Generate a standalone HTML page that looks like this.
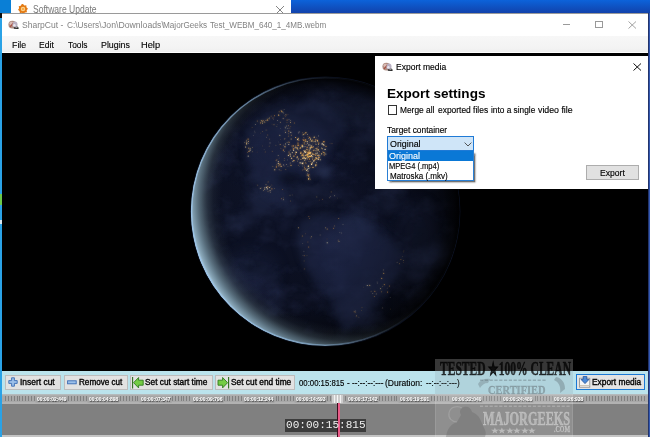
<!DOCTYPE html>
<html><head><meta charset="utf-8"><title>SharpCut</title><style>
html,body{margin:0;padding:0;}
body{width:650px;height:437px;overflow:hidden;position:relative;background:#1b63c8;font-family:'Liberation Sans', sans-serif;}
#root{position:absolute;left:0;top:0;width:650px;height:437px;overflow:hidden;}
.a{position:absolute;}
.t{position:absolute;white-space:nowrap;transform-origin:0 50%;}
</style></head><body>
<div id="root">
<!-- desktop -->
<div class="a" style="left:0;top:0;width:650px;height:437px;background:#0a7fd6"></div>
<div class="a" style="left:291px;top:0;width:359px;height:14px;background:linear-gradient(#0c63da,#1240a8)"></div>
<div class="a" style="left:648px;top:13px;width:1.2px;height:424px;background:#23346c"></div>
<div class="a" style="left:649.2px;top:13px;width:0.8px;height:424px;background:#3258b0"></div>
<!-- software update window -->
<div class="a" style="left:11.3px;top:0;width:280px;height:14px;background:#fff"></div>
<svg class="a" style="left:16.9px;top:2.9px" width="12" height="12" viewBox="-7 -7 14 14">
<polygon fill="#e47a14" points="0,-5.8 1.6,-4 3.9,-4.3 4,-1.9 5.8,-0.3 4.3,1.5 4.6,3.9 2.2,4 0.6,5.8 -1.3,4.4 -3.6,4.9 -4,2.5 -5.8,1 -4.5,-1 -5,-3.3 -2.6,-3.8 -1.4,-5.7"/>
<circle r="2.6" fill="#fbd28a"/><circle r="1.3" fill="#f6a23a"/>
</svg>
<svg class="a" style="left:275px;top:4.5px" width="10" height="10" viewBox="0 0 10 10"><path d="M1 1L9 9M9 1L1 9" stroke="#777" stroke-width="0.9" fill="none"/></svg>
<!-- main window -->
<div class="a" style="left:2px;top:13px;width:646px;height:424px;background:#fff;border-top:1px solid #9a9a9a;box-sizing:border-box"></div>
<div class="a" style="left:0;top:13px;width:2px;height:424px;background:#2aa2e6"></div>
<div class="a" style="left:0;top:194px;width:2px;height:11px;background:#6cc848"></div>
<div class="a" style="left:0;top:220px;width:2px;height:4px;background:#d8e4ee"></div>
<div class="a" style="left:0;top:13px;width:2px;height:4.5px;background:#111"></div>
<!-- title icon -->
<svg class="a" style="left:8.4px;top:19.6px" width="12" height="10" viewBox="0 0 12 10">
<ellipse cx="4.4" cy="4.6" rx="4" ry="3.9" fill="#b08e84"/><ellipse cx="3.4" cy="3.4" rx="2" ry="1.6" fill="#d9bcb4"/><path d="M2 7 L5.6 2.6" stroke="#a8483a" stroke-width="1.1"/><ellipse cx="7" cy="4.4" rx="2.5" ry="2.9" fill="#b9b0c2"/><ellipse cx="6.4" cy="5.2" rx="1.2" ry="1.3" fill="#e9e6ee"/>
<path d="M5.8 8 L10.4 8.4" stroke="#222" stroke-width="1.3"/><path d="M9 6.4 L10.4 8.3" stroke="#333" stroke-width="1"/>
</svg>
<!-- window buttons -->
<div class="a" style="left:562.5px;top:24.2px;width:7.5px;height:1px;background:#9a9a9a"></div>
<div class="a" style="left:594.7px;top:20.8px;width:8px;height:7px;border:1px solid #999;box-sizing:border-box"></div>
<svg class="a" style="left:628px;top:20.5px" width="8.5" height="8" viewBox="0 0 8.5 8"><path d="M0.5 0.5L8 7.5M8 0.5L0.5 7.5" stroke="#999" stroke-width="0.9" fill="none"/></svg>
<!-- menu bar -->
<div class="a" style="left:2px;top:36px;width:646px;height:17px;background:linear-gradient(#f7f7f7,#f3f3f3 70%,#efefef 92%,#fdfdfd 96%)"></div>
<!-- video -->
<div class="a" style="left:2px;top:52.8px;width:646px;height:318.4px;background:#000"></div>
<svg id="earth" width="650" height="437" viewBox="0 0 650 437" style="position:absolute;left:0;top:0">
<defs>
<clipPath id="ec"><circle cx="325.3" cy="211.5" r="134.5"/></clipPath>
<radialGradient id="limb" gradientUnits="userSpaceOnUse" cx="348.3" cy="199.5" r="160.4">
<stop offset="0" stop-color="#46565f" stop-opacity="0"/>
<stop offset="0.79" stop-color="#46565f" stop-opacity="0"/>
<stop offset="0.84" stop-color="#485862" stop-opacity="0.14"/>
<stop offset="0.88" stop-color="#4e606c" stop-opacity="0.4"/>
<stop offset="0.915" stop-color="#5a707e" stop-opacity="0.74"/>
<stop offset="0.95" stop-color="#6c8696" stop-opacity="0.95"/>
<stop offset="0.98" stop-color="#8aa8ba" stop-opacity="1"/>
<stop offset="1" stop-color="#b4d4ea" stop-opacity="1"/>
</radialGradient>
<radialGradient id="shade" gradientUnits="userSpaceOnUse" cx="275.3" cy="221.5" r="195.025">
<stop offset="0" stop-color="#000" stop-opacity="0"/>
<stop offset="0.45" stop-color="#000" stop-opacity="0.03"/>
<stop offset="0.8" stop-color="#000" stop-opacity="0.3"/>
<stop offset="1" stop-color="#000" stop-opacity="0.6"/>
</radialGradient>
<radialGradient id="edge" gradientUnits="userSpaceOnUse" cx="325.3" cy="211.5" r="134.5">
<stop offset="0" stop-color="#000" stop-opacity="0"/>
<stop offset="0.88" stop-color="#000" stop-opacity="0"/>
<stop offset="0.96" stop-color="#000" stop-opacity="0.45"/>
<stop offset="1" stop-color="#000" stop-opacity="0.9"/>
</radialGradient>
<linearGradient id="rim" gradientUnits="userSpaceOnUse" x1="195.9" y1="246.2" x2="454.70000000000005" y2="176.8">
<stop offset="0" stop-color="#9cc4e8" stop-opacity="0.9"/>
<stop offset="0.35" stop-color="#8ab2d6" stop-opacity="0.6"/>
<stop offset="0.55" stop-color="#6a8ab4" stop-opacity="0.25"/>
<stop offset="0.7" stop-color="#5a7aa8" stop-opacity="0.05"/>
<stop offset="1" stop-color="#4a6a98" stop-opacity="0"/>
</linearGradient>
<radialGradient id="body" gradientUnits="userSpaceOnUse" cx="295.3" cy="171.5" r="201.75">
<stop offset="0" stop-color="#0f1429"/>
<stop offset="0.6" stop-color="#0b0f20"/>
<stop offset="1" stop-color="#05070e"/>
</radialGradient>
<filter id="cl" x="0" y="0" width="100%" height="100%" color-interpolation-filters="sRGB">
<feTurbulence type="fractalNoise" baseFrequency="0.018 0.022" numOctaves="5" seed="11" result="n"/>
<feColorMatrix in="n" type="matrix" values="0 0 0 0 0.19  0 0 0 0 0.23  0 0 0 0 0.38  3.2 0 0 0 -1.45"/>
</filter>
<filter id="cl2" x="0" y="0" width="100%" height="100%" color-interpolation-filters="sRGB">
<feTurbulence type="fractalNoise" baseFrequency="0.05 0.06" numOctaves="4" seed="3" result="n"/>
<feColorMatrix in="n" type="matrix" values="0 0 0 0 0.21  0 0 0 0 0.25  0 0 0 0 0.40  0 2.6 0 0 -1.25"/>
</filter>
<filter id="b6" x="-50%" y="-50%" width="200%" height="200%" color-interpolation-filters="sRGB"><feGaussianBlur stdDeviation="6"/></filter>
<filter id="b3" x="-50%" y="-50%" width="200%" height="200%" color-interpolation-filters="sRGB"><feGaussianBlur stdDeviation="3"/></filter>
<filter id="b2" x="-50%" y="-50%" width="200%" height="200%" color-interpolation-filters="sRGB"><feGaussianBlur stdDeviation="1.3"/></filter>
<filter id="b1" x="-50%" y="-50%" width="200%" height="200%" color-interpolation-filters="sRGB"><feGaussianBlur stdDeviation="0.35"/></filter>
</defs>
<circle cx="325.3" cy="211.5" r="135.1" fill="#0a1020"/>
<g clip-path="url(#ec)">
<circle cx="325.3" cy="211.5" r="134.5" fill="url(#body)"/>
<g filter="url(#b6)" opacity="0.3">
<ellipse cx="290" cy="148" rx="42" ry="30" fill="#2b3760"/>
<ellipse cx="270" cy="185" rx="18" ry="14" fill="#283358"/>
<ellipse cx="355" cy="255" rx="42" ry="36" fill="#253056"/>
<ellipse cx="360" cy="300" rx="22" ry="26" fill="#222c50"/>
<ellipse cx="360" cy="110" rx="40" ry="16" fill="#2a3558"/>
<ellipse cx="420" cy="240" rx="20" ry="40" fill="#222b4c"/>
<ellipse cx="250" cy="270" rx="30" ry="22" fill="#1f2848"/>
</g>
<rect x="190.8" y="77.0" width="269.0" height="269.0" filter="url(#cl)" opacity="0.34"/>
<rect x="190.8" y="77.0" width="269.0" height="269.0" filter="url(#cl2)" opacity="0.2"/>
<g filter="url(#b3)" opacity="0.5">
<polygon points="300,222 318,214 345,216 368,226 388,238 406,254 400,272 388,288 374,300 362,314 352,330 344,338 338,322 330,300 314,282 302,262 296,240" fill="#222b4c"/>
<polygon points="246,160 244,138 252,122 284,106 310,100 340,112 345,130 334,146 322,162 312,172 312,182 304,172 284,174 280,188 290,200 280,204 262,192 252,176" fill="#1e2747"/>
</g>
<g filter="url(#b3)" opacity="0.8">
<ellipse cx="290" cy="178" rx="13" ry="6" fill="#070a16" opacity="0.55"/>
<ellipse cx="323" cy="171" rx="8" ry="6.5" fill="#2c3658" opacity="0.8"/>
</g>
<g filter="url(#b2)" opacity="0.75">
<circle cx="273.5" cy="119.3" r="0.42" fill="#ffe8b8" opacity="0.33"/>
<circle cx="252.6" cy="151.7" r="0.48" fill="#ffcf7a" opacity="0.39"/>
<circle cx="283.5" cy="113.2" r="0.30" fill="#ffe8b8" opacity="0.47"/>
<circle cx="255.3" cy="124.7" r="0.42" fill="#ffe8b8" opacity="0.68"/>
<circle cx="264.1" cy="149.7" r="0.31" fill="#ffe8b8" opacity="0.47"/>
<circle cx="254.7" cy="131.1" r="0.46" fill="#ffe8b8" opacity="0.37"/>
<circle cx="295.4" cy="154.4" r="0.39" fill="#f0a444" opacity="0.51"/>
<circle cx="276.9" cy="126.6" r="0.32" fill="#ffcf7a" opacity="0.61"/>
<circle cx="296.3" cy="147.4" r="0.47" fill="#f0a444" opacity="0.59"/>
<circle cx="290.6" cy="120.4" r="0.36" fill="#ffdc98" opacity="0.67"/>
<circle cx="313.6" cy="151.0" r="0.47" fill="#eea040" opacity="0.43"/>
<circle cx="275.9" cy="145.3" r="0.46" fill="#ffcf7a" opacity="0.33"/>
<circle cx="330.0" cy="143.6" r="0.43" fill="#eea040" opacity="0.32"/>
<circle cx="272.2" cy="151.3" r="0.43" fill="#eea040" opacity="0.48"/>
<circle cx="279.1" cy="158.1" r="0.28" fill="#f8b858" opacity="0.48"/>
<circle cx="299.6" cy="145.0" r="0.33" fill="#eea040" opacity="0.41"/>
<circle cx="266.5" cy="137.3" r="0.47" fill="#ffdc98" opacity="0.33"/>
<circle cx="280.5" cy="128.8" r="0.31" fill="#ffe8b8" opacity="0.47"/>
<circle cx="269.3" cy="139.1" r="0.36" fill="#f8b858" opacity="0.65"/>
<circle cx="257.7" cy="121.2" r="0.33" fill="#ffdc98" opacity="0.39"/>
<circle cx="269.7" cy="118.9" r="0.40" fill="#f0a444" opacity="0.54"/>
<circle cx="290.9" cy="154.3" r="0.43" fill="#eea040" opacity="0.32"/>
<circle cx="316.6" cy="137.4" r="0.37" fill="#eea040" opacity="0.34"/>
<circle cx="280.4" cy="122.3" r="0.50" fill="#ffcf7a" opacity="0.48"/>
<circle cx="253.2" cy="135.3" r="0.29" fill="#ffe8b8" opacity="0.65"/>
<circle cx="278.2" cy="155.6" r="0.49" fill="#ffdc98" opacity="0.54"/>
<circle cx="288.0" cy="114.4" r="0.30" fill="#f0a444" opacity="0.44"/>
<circle cx="287.6" cy="159.9" r="0.39" fill="#ffe8b8" opacity="0.38"/>
<circle cx="276.9" cy="159.8" r="0.48" fill="#f0a444" opacity="0.60"/>
<circle cx="277.4" cy="120.5" r="0.45" fill="#ffe8b8" opacity="0.51"/>
<circle cx="274.0" cy="124.7" r="0.46" fill="#f8b858" opacity="0.69"/>
<circle cx="291.1" cy="134.7" r="0.29" fill="#f0a444" opacity="0.31"/>
<circle cx="287.0" cy="122.5" r="0.41" fill="#eea040" opacity="0.44"/>
<circle cx="277.2" cy="124.5" r="0.33" fill="#f8b858" opacity="0.38"/>
<circle cx="302.5" cy="170.6" r="0.31" fill="#eea040" opacity="0.46"/>
<circle cx="312.3" cy="143.9" r="0.32" fill="#f0a444" opacity="0.62"/>
<circle cx="309.7" cy="142.7" r="0.44" fill="#f8b858" opacity="0.33"/>
<circle cx="303.8" cy="134.3" r="0.40" fill="#ffcf7a" opacity="0.35"/>
<circle cx="316.7" cy="162.5" r="0.30" fill="#f8b858" opacity="0.60"/>
<circle cx="266.9" cy="130.0" r="0.33" fill="#f0a444" opacity="0.53"/>
<circle cx="318.2" cy="146.8" r="0.46" fill="#f8b858" opacity="0.65"/>
<circle cx="292.4" cy="147.3" r="0.28" fill="#f8b858" opacity="0.48"/>
<circle cx="299.4" cy="166.2" r="0.31" fill="#ffe8b8" opacity="0.36"/>
<circle cx="310.0" cy="149.7" r="0.35" fill="#ffe8b8" opacity="0.51"/>
<circle cx="287.9" cy="166.2" r="0.47" fill="#f8b858" opacity="0.32"/>
<circle cx="290.2" cy="150.1" r="0.45" fill="#ffdc98" opacity="0.66"/>
<circle cx="269.2" cy="146.1" r="0.46" fill="#f8b858" opacity="0.50"/>
<circle cx="307.6" cy="173.7" r="0.49" fill="#ffe8b8" opacity="0.40"/>
<circle cx="284.7" cy="139.2" r="0.37" fill="#eea040" opacity="0.43"/>
<circle cx="304.9" cy="166.8" r="0.48" fill="#eea040" opacity="0.36"/>
<circle cx="302.6" cy="135.5" r="0.34" fill="#ffdc98" opacity="0.35"/>
<circle cx="280.2" cy="144.5" r="0.50" fill="#f8b858" opacity="0.63"/>
<circle cx="280.7" cy="139.6" r="0.36" fill="#f0a444" opacity="0.34"/>
<circle cx="284.1" cy="109.4" r="0.35" fill="#ffe8b8" opacity="0.55"/>
<circle cx="280.9" cy="148.2" r="0.39" fill="#f0a444" opacity="0.50"/>
<circle cx="306.6" cy="139.9" r="0.30" fill="#eea040" opacity="0.68"/>
<circle cx="252.1" cy="127.5" r="0.41" fill="#f0a444" opacity="0.39"/>
<circle cx="322.5" cy="142.0" r="0.35" fill="#f0a444" opacity="0.52"/>
<circle cx="308.6" cy="178.4" r="0.49" fill="#f8b858" opacity="0.40"/>
<circle cx="262.4" cy="131.4" r="0.35" fill="#f0a444" opacity="0.60"/>
<circle cx="284.6" cy="158.4" r="0.34" fill="#f0a444" opacity="0.62"/>
<circle cx="290.8" cy="126.4" r="0.38" fill="#eea040" opacity="0.56"/>
<circle cx="283.3" cy="145.1" r="0.46" fill="#ffe8b8" opacity="0.46"/>
<circle cx="272.0" cy="124.1" r="0.33" fill="#eea040" opacity="0.38"/>
<circle cx="283.2" cy="112.2" r="0.43" fill="#ffe8b8" opacity="0.45"/>
<circle cx="266.0" cy="130.0" r="0.38" fill="#ffdc98" opacity="0.36"/>
<circle cx="260.6" cy="133.1" r="0.30" fill="#eea040" opacity="0.41"/>
<circle cx="262.3" cy="145.9" r="0.28" fill="#ffcf7a" opacity="0.41"/>
<circle cx="257.1" cy="152.0" r="0.37" fill="#eea040" opacity="0.42"/>
<circle cx="265.2" cy="151.9" r="0.40" fill="#eea040" opacity="0.60"/>
<circle cx="298.3" cy="165.3" r="0.44" fill="#f0a444" opacity="0.50"/>
<circle cx="309.9" cy="156.2" r="0.29" fill="#ffe8b8" opacity="0.63"/>
<circle cx="301.1" cy="163.0" r="0.46" fill="#ffe8b8" opacity="0.36"/>
<circle cx="312.5" cy="150.6" r="0.46" fill="#eea040" opacity="0.31"/>
<circle cx="306.1" cy="160.0" r="0.33" fill="#f8b858" opacity="0.31"/>
<circle cx="278.3" cy="141.9" r="0.29" fill="#ffe8b8" opacity="0.31"/>
<circle cx="305.9" cy="144.7" r="0.28" fill="#eea040" opacity="0.62"/>
<circle cx="252.4" cy="147.4" r="0.44" fill="#ffcf7a" opacity="0.49"/>
<circle cx="303.1" cy="142.5" r="0.47" fill="#eea040" opacity="0.33"/>
<circle cx="298.6" cy="132.9" r="0.42" fill="#ffe8b8" opacity="0.58"/>
<circle cx="305.2" cy="159.9" r="0.43" fill="#ffe8b8" opacity="0.42"/>
<circle cx="270.0" cy="142.9" r="0.45" fill="#ffe8b8" opacity="0.70"/>
<circle cx="285.8" cy="169.5" r="0.49" fill="#f0a444" opacity="0.48"/>
<circle cx="267.8" cy="135.0" r="0.41" fill="#f0a444" opacity="0.55"/>
<circle cx="285.0" cy="130.6" r="0.31" fill="#f0a444" opacity="0.44"/>
<circle cx="255.0" cy="132.8" r="0.35" fill="#ffdc98" opacity="0.44"/>
<circle cx="308.9" cy="175.6" r="0.34" fill="#ffdc98" opacity="0.45"/>
<circle cx="304.2" cy="155.6" r="0.31" fill="#ffdc98" opacity="0.69"/>
<circle cx="290.5" cy="122.2" r="0.36" fill="#ffcf7a" opacity="0.68"/>
<circle cx="317.9" cy="155.3" r="0.48" fill="#ffe8b8" opacity="0.68"/>
<circle cx="311.4" cy="155.7" r="0.67" fill="#ffe8b8" opacity="0.71"/>
<circle cx="310.3" cy="138.3" r="0.41" fill="#ffe8b8" opacity="0.52"/>
<circle cx="319.1" cy="159.7" r="0.44" fill="#eea040" opacity="0.65"/>
<circle cx="308.8" cy="138.2" r="0.46" fill="#ffdc98" opacity="0.62"/>
<circle cx="299.2" cy="148.6" r="0.37" fill="#f8b858" opacity="0.58"/>
<circle cx="289.0" cy="151.9" r="0.52" fill="#f0a444" opacity="0.73"/>
<circle cx="322.6" cy="151.8" r="0.36" fill="#ffcf7a" opacity="0.60"/>
<circle cx="316.7" cy="162.8" r="0.43" fill="#ffe8b8" opacity="0.68"/>
<circle cx="310.7" cy="153.8" r="0.65" fill="#eea040" opacity="0.69"/>
<circle cx="298.9" cy="150.6" r="0.44" fill="#f0a444" opacity="0.53"/>
<circle cx="300.3" cy="148.0" r="0.57" fill="#f8b858" opacity="0.76"/>
<circle cx="297.6" cy="161.1" r="0.47" fill="#ffcf7a" opacity="0.66"/>
<circle cx="318.4" cy="159.2" r="0.61" fill="#ffe8b8" opacity="0.90"/>
<circle cx="305.5" cy="152.2" r="0.67" fill="#ffe8b8" opacity="0.96"/>
<circle cx="310.1" cy="156.6" r="0.36" fill="#eea040" opacity="0.76"/>
<circle cx="303.3" cy="134.5" r="0.66" fill="#ffcf7a" opacity="0.54"/>
<circle cx="316.0" cy="152.0" r="0.53" fill="#eea040" opacity="0.52"/>
<circle cx="308.0" cy="156.7" r="0.40" fill="#eea040" opacity="0.82"/>
<circle cx="310.5" cy="147.7" r="0.42" fill="#f8b858" opacity="0.97"/>
<circle cx="303.8" cy="156.4" r="0.54" fill="#f0a444" opacity="0.51"/>
<circle cx="319.3" cy="151.8" r="0.43" fill="#f8b858" opacity="0.92"/>
<circle cx="301.7" cy="153.1" r="0.40" fill="#eea040" opacity="0.98"/>
<circle cx="307.7" cy="149.4" r="0.38" fill="#eea040" opacity="0.94"/>
<circle cx="302.2" cy="155.5" r="0.57" fill="#f8b858" opacity="0.96"/>
<circle cx="292.3" cy="152.6" r="0.59" fill="#ffdc98" opacity="0.68"/>
<circle cx="309.1" cy="140.8" r="0.38" fill="#f0a444" opacity="0.98"/>
<circle cx="310.8" cy="145.8" r="0.49" fill="#f0a444" opacity="0.63"/>
<circle cx="291.1" cy="139.1" r="0.49" fill="#ffcf7a" opacity="0.96"/>
<circle cx="316.1" cy="150.3" r="0.46" fill="#ffe8b8" opacity="0.61"/>
<circle cx="312.4" cy="154.4" r="0.32" fill="#eea040" opacity="0.70"/>
<circle cx="323.9" cy="141.7" r="0.70" fill="#f0a444" opacity="0.97"/>
<circle cx="316.1" cy="164.9" r="0.51" fill="#f0a444" opacity="0.73"/>
<circle cx="304.3" cy="144.0" r="0.45" fill="#f8b858" opacity="0.67"/>
<circle cx="313.6" cy="154.4" r="0.33" fill="#ffcf7a" opacity="0.71"/>
<circle cx="292.0" cy="146.0" r="0.45" fill="#f0a444" opacity="0.88"/>
<circle cx="315.4" cy="142.9" r="0.32" fill="#f0a444" opacity="0.74"/>
<circle cx="297.9" cy="149.3" r="0.43" fill="#ffdc98" opacity="0.87"/>
<circle cx="321.6" cy="153.8" r="0.62" fill="#ffcf7a" opacity="0.88"/>
<circle cx="300.9" cy="159.5" r="0.62" fill="#f8b858" opacity="0.53"/>
<circle cx="305.1" cy="158.4" r="0.68" fill="#f0a444" opacity="0.81"/>
<circle cx="309.6" cy="137.5" r="0.67" fill="#eea040" opacity="0.65"/>
<circle cx="291.7" cy="135.0" r="0.31" fill="#ffdc98" opacity="0.62"/>
<circle cx="307.2" cy="141.6" r="0.61" fill="#ffdc98" opacity="0.89"/>
<circle cx="312.4" cy="147.3" r="0.50" fill="#eea040" opacity="0.50"/>
<circle cx="304.2" cy="165.8" r="0.36" fill="#f0a444" opacity="0.62"/>
<circle cx="290.5" cy="156.1" r="0.54" fill="#ffdc98" opacity="0.76"/>
<circle cx="310.2" cy="144.8" r="0.33" fill="#ffe8b8" opacity="0.52"/>
<circle cx="303.5" cy="150.4" r="0.47" fill="#ffcf7a" opacity="0.55"/>
<circle cx="309.5" cy="156.0" r="0.34" fill="#eea040" opacity="0.75"/>
<circle cx="317.0" cy="151.0" r="0.35" fill="#eea040" opacity="0.73"/>
<circle cx="311.4" cy="163.8" r="0.61" fill="#f0a444" opacity="0.88"/>
<circle cx="306.0" cy="163.8" r="0.45" fill="#f8b858" opacity="0.87"/>
<circle cx="303.2" cy="154.3" r="0.39" fill="#ffe8b8" opacity="0.64"/>
<circle cx="311.6" cy="155.2" r="0.40" fill="#ffe8b8" opacity="0.62"/>
<circle cx="289.9" cy="128.1" r="0.34" fill="#f8b858" opacity="0.74"/>
<circle cx="319.3" cy="154.0" r="0.35" fill="#ffe8b8" opacity="0.59"/>
<circle cx="311.6" cy="155.5" r="0.51" fill="#ffe8b8" opacity="0.59"/>
<circle cx="308.8" cy="168.4" r="0.68" fill="#ffe8b8" opacity="0.55"/>
<circle cx="307.3" cy="143.5" r="0.31" fill="#ffcf7a" opacity="0.67"/>
<circle cx="312.5" cy="159.0" r="0.54" fill="#f8b858" opacity="0.83"/>
<circle cx="318.4" cy="135.9" r="0.46" fill="#ffe8b8" opacity="0.69"/>
<circle cx="307.0" cy="157.9" r="0.62" fill="#ffcf7a" opacity="0.77"/>
<circle cx="292.8" cy="161.2" r="0.57" fill="#ffe8b8" opacity="0.58"/>
<circle cx="315.8" cy="155.1" r="0.58" fill="#f0a444" opacity="0.70"/>
<circle cx="304.1" cy="143.4" r="0.32" fill="#f0a444" opacity="0.87"/>
<circle cx="308.1" cy="152.9" r="0.61" fill="#eea040" opacity="0.90"/>
<circle cx="310.4" cy="153.0" r="0.66" fill="#ffcf7a" opacity="0.71"/>
<circle cx="290.2" cy="162.9" r="0.48" fill="#ffcf7a" opacity="0.58"/>
<circle cx="316.0" cy="153.7" r="0.62" fill="#ffe8b8" opacity="0.70"/>
<circle cx="302.0" cy="145.6" r="0.50" fill="#f0a444" opacity="0.57"/>
<circle cx="313.7" cy="157.0" r="0.33" fill="#f8b858" opacity="0.69"/>
<circle cx="303.0" cy="169.2" r="0.32" fill="#f0a444" opacity="0.96"/>
<circle cx="291.0" cy="165.3" r="0.55" fill="#f8b858" opacity="0.91"/>
<circle cx="295.6" cy="137.5" r="0.55" fill="#f8b858" opacity="0.81"/>
<circle cx="313.5" cy="146.7" r="0.39" fill="#ffe8b8" opacity="0.70"/>
<circle cx="316.0" cy="159.5" r="0.36" fill="#f8b858" opacity="0.99"/>
<circle cx="324.3" cy="155.1" r="0.60" fill="#f0a444" opacity="0.52"/>
<circle cx="294.6" cy="147.9" r="0.42" fill="#ffe8b8" opacity="0.71"/>
<circle cx="310.1" cy="161.4" r="0.45" fill="#f8b858" opacity="0.75"/>
<circle cx="325.8" cy="153.9" r="0.50" fill="#ffe8b8" opacity="0.62"/>
<circle cx="312.4" cy="141.7" r="0.37" fill="#ffcf7a" opacity="0.74"/>
<circle cx="319.9" cy="155.7" r="0.45" fill="#ffe8b8" opacity="0.90"/>
<circle cx="306.7" cy="151.8" r="0.55" fill="#eea040" opacity="0.54"/>
<circle cx="302.8" cy="166.0" r="0.33" fill="#ffdc98" opacity="0.88"/>
<circle cx="298.4" cy="138.4" r="0.31" fill="#ffe8b8" opacity="0.53"/>
<circle cx="307.6" cy="134.7" r="0.38" fill="#ffdc98" opacity="0.99"/>
<circle cx="305.1" cy="168.9" r="0.62" fill="#eea040" opacity="0.84"/>
<circle cx="313.8" cy="150.5" r="0.44" fill="#f8b858" opacity="0.88"/>
<circle cx="302.9" cy="163.7" r="0.66" fill="#f0a444" opacity="0.73"/>
<circle cx="284.2" cy="151.7" r="0.38" fill="#ffe8b8" opacity="0.63"/>
<circle cx="310.9" cy="161.1" r="0.38" fill="#eea040" opacity="0.70"/>
<circle cx="326.0" cy="146.4" r="0.66" fill="#f0a444" opacity="0.58"/>
<circle cx="320.6" cy="159.7" r="0.55" fill="#ffdc98" opacity="0.68"/>
<circle cx="295.8" cy="147.7" r="0.65" fill="#ffe8b8" opacity="0.55"/>
<circle cx="302.1" cy="145.1" r="0.62" fill="#f0a444" opacity="0.63"/>
<circle cx="300.4" cy="147.8" r="0.61" fill="#f8b858" opacity="0.72"/>
<circle cx="288.3" cy="136.1" r="0.42" fill="#f0a444" opacity="0.76"/>
<circle cx="288.8" cy="131.0" r="0.53" fill="#f0a444" opacity="0.83"/>
<circle cx="308.0" cy="136.3" r="0.39" fill="#eea040" opacity="0.65"/>
<circle cx="297.4" cy="156.7" r="0.66" fill="#f8b858" opacity="0.57"/>
<circle cx="307.3" cy="150.1" r="0.32" fill="#f0a444" opacity="0.78"/>
<circle cx="318.5" cy="157.5" r="0.39" fill="#ffe8b8" opacity="0.79"/>
<circle cx="317.3" cy="158.8" r="0.63" fill="#ffcf7a" opacity="0.58"/>
<circle cx="317.9" cy="149.2" r="0.36" fill="#eea040" opacity="0.55"/>
<circle cx="307.4" cy="169.2" r="0.69" fill="#ffe8b8" opacity="0.53"/>
<circle cx="322.1" cy="144.0" r="0.53" fill="#ffe8b8" opacity="0.80"/>
<circle cx="309.1" cy="144.9" r="0.66" fill="#ffe8b8" opacity="0.52"/>
<circle cx="317.3" cy="153.0" r="0.36" fill="#ffcf7a" opacity="0.96"/>
<circle cx="324.5" cy="152.9" r="0.68" fill="#f8b858" opacity="0.57"/>
<circle cx="293.6" cy="150.4" r="0.56" fill="#ffe8b8" opacity="0.71"/>
<circle cx="314.5" cy="159.3" r="0.42" fill="#eea040" opacity="0.52"/>
<circle cx="313.8" cy="137.3" r="0.30" fill="#eea040" opacity="0.92"/>
<circle cx="314.0" cy="150.0" r="0.56" fill="#ffcf7a" opacity="0.59"/>
<circle cx="308.8" cy="165.6" r="0.35" fill="#eea040" opacity="0.95"/>
<circle cx="318.4" cy="149.4" r="0.32" fill="#eea040" opacity="0.82"/>
<circle cx="291.3" cy="158.5" r="0.51" fill="#eea040" opacity="0.63"/>
<circle cx="332.0" cy="143.3" r="0.33" fill="#f8b858" opacity="0.75"/>
<circle cx="309.5" cy="159.0" r="0.60" fill="#eea040" opacity="0.97"/>
<circle cx="316.5" cy="148.8" r="0.46" fill="#ffdc98" opacity="0.80"/>
<circle cx="323.6" cy="144.6" r="0.58" fill="#ffe8b8" opacity="0.83"/>
<circle cx="288.4" cy="155.5" r="0.58" fill="#ffdc98" opacity="0.93"/>
<circle cx="318.1" cy="150.1" r="0.65" fill="#ffdc98" opacity="0.89"/>
<circle cx="306.7" cy="149.3" r="0.66" fill="#ffcf7a" opacity="0.57"/>
<circle cx="309.1" cy="149.7" r="0.36" fill="#ffcf7a" opacity="0.82"/>
<circle cx="303.9" cy="137.3" r="0.33" fill="#f0a444" opacity="0.80"/>
<circle cx="293.4" cy="149.0" r="0.65" fill="#eea040" opacity="0.88"/>
<circle cx="315.1" cy="150.5" r="0.38" fill="#ffcf7a" opacity="0.56"/>
<circle cx="310.1" cy="147.9" r="0.60" fill="#ffdc98" opacity="0.82"/>
<circle cx="314.2" cy="154.5" r="0.60" fill="#f0a444" opacity="0.60"/>
<circle cx="305.4" cy="158.3" r="0.44" fill="#ffcf7a" opacity="0.97"/>
<circle cx="307.6" cy="143.1" r="0.43" fill="#ffe8b8" opacity="0.98"/>
<circle cx="300.6" cy="153.2" r="0.60" fill="#ffcf7a" opacity="0.89"/>
<circle cx="291.8" cy="158.4" r="0.44" fill="#ffe8b8" opacity="0.85"/>
<circle cx="293.3" cy="145.9" r="0.63" fill="#f0a444" opacity="0.79"/>
<circle cx="310.3" cy="152.4" r="0.38" fill="#ffcf7a" opacity="0.88"/>
<circle cx="323.4" cy="152.3" r="0.50" fill="#f8b858" opacity="0.90"/>
<circle cx="325.1" cy="149.4" r="0.68" fill="#ffe8b8" opacity="0.76"/>
<circle cx="318.8" cy="149.3" r="0.39" fill="#ffdc98" opacity="0.85"/>
<circle cx="311.4" cy="141.0" r="0.70" fill="#ffcf7a" opacity="0.78"/>
<circle cx="302.5" cy="145.6" r="0.46" fill="#eea040" opacity="0.70"/>
<circle cx="317.7" cy="153.0" r="0.41" fill="#ffe8b8" opacity="0.95"/>
<circle cx="291.2" cy="135.3" r="0.35" fill="#eea040" opacity="0.80"/>
<circle cx="310.3" cy="138.3" r="0.44" fill="#f8b858" opacity="0.66"/>
<circle cx="318.5" cy="144.3" r="0.52" fill="#ffdc98" opacity="0.66"/>
<circle cx="291.6" cy="158.1" r="0.53" fill="#ffdc98" opacity="0.56"/>
<circle cx="298.9" cy="140.5" r="0.50" fill="#eea040" opacity="0.63"/>
<circle cx="317.4" cy="140.3" r="0.59" fill="#eea040" opacity="0.99"/>
<circle cx="303.5" cy="162.2" r="0.36" fill="#f8b858" opacity="0.66"/>
<circle cx="308.4" cy="175.6" r="0.70" fill="#eea040" opacity="0.58"/>
<circle cx="319.1" cy="157.6" r="0.69" fill="#eea040" opacity="0.90"/>
<circle cx="307.3" cy="159.3" r="0.34" fill="#f0a444" opacity="0.96"/>
<circle cx="313.1" cy="161.1" r="0.31" fill="#ffdc98" opacity="0.70"/>
<circle cx="305.3" cy="141.5" r="0.55" fill="#f8b858" opacity="0.73"/>
<circle cx="309.1" cy="167.5" r="0.30" fill="#ffdc98" opacity="0.62"/>
<circle cx="305.4" cy="139.9" r="0.56" fill="#eea040" opacity="0.92"/>
<circle cx="305.9" cy="132.7" r="0.61" fill="#f8b858" opacity="0.85"/>
<circle cx="302.9" cy="139.7" r="0.48" fill="#eea040" opacity="0.66"/>
<circle cx="302.6" cy="132.8" r="0.40" fill="#eea040" opacity="0.70"/>
<circle cx="304.0" cy="146.8" r="0.47" fill="#ffe8b8" opacity="0.73"/>
<circle cx="318.8" cy="143.1" r="0.56" fill="#eea040" opacity="0.94"/>
<circle cx="309.2" cy="153.2" r="0.63" fill="#ffcf7a" opacity="0.95"/>
<circle cx="324.0" cy="154.8" r="0.36" fill="#f8b858" opacity="0.89"/>
<circle cx="304.7" cy="151.5" r="0.53" fill="#eea040" opacity="0.77"/>
<circle cx="308.0" cy="152.3" r="0.62" fill="#f0a444" opacity="0.68"/>
<circle cx="286.4" cy="164.3" r="0.38" fill="#ffdc98" opacity="0.84"/>
<circle cx="283.4" cy="150.1" r="0.59" fill="#eea040" opacity="0.81"/>
<circle cx="318.6" cy="154.6" r="0.46" fill="#ffdc98" opacity="0.51"/>
<circle cx="324.0" cy="145.2" r="0.57" fill="#ffcf7a" opacity="0.79"/>
<circle cx="313.0" cy="167.4" r="0.68" fill="#f8b858" opacity="0.76"/>
<circle cx="303.3" cy="153.3" r="0.67" fill="#eea040" opacity="0.53"/>
<circle cx="315.8" cy="164.8" r="0.59" fill="#f8b858" opacity="0.91"/>
<circle cx="300.1" cy="162.8" r="0.63" fill="#ffdc98" opacity="0.91"/>
<circle cx="298.2" cy="138.7" r="0.49" fill="#f8b858" opacity="0.89"/>
<circle cx="308.8" cy="161.2" r="0.40" fill="#f8b858" opacity="0.71"/>
<circle cx="289.3" cy="154.0" r="0.62" fill="#eea040" opacity="0.68"/>
<circle cx="305.8" cy="162.3" r="0.47" fill="#eea040" opacity="0.82"/>
<circle cx="315.3" cy="148.7" r="0.42" fill="#ffcf7a" opacity="0.69"/>
<circle cx="311.3" cy="146.9" r="0.63" fill="#ffcf7a" opacity="0.82"/>
<circle cx="305.7" cy="146.6" r="0.33" fill="#ffe8b8" opacity="0.65"/>
<circle cx="315.1" cy="155.1" r="0.39" fill="#f0a444" opacity="0.89"/>
<circle cx="311.7" cy="145.7" r="0.46" fill="#ffe8b8" opacity="0.77"/>
<circle cx="322.2" cy="143.8" r="0.61" fill="#ffe8b8" opacity="0.83"/>
<circle cx="315.7" cy="165.8" r="0.51" fill="#ffdc98" opacity="0.87"/>
<circle cx="307.3" cy="147.8" r="0.35" fill="#f8b858" opacity="0.71"/>
<circle cx="295.5" cy="154.0" r="0.49" fill="#eea040" opacity="0.95"/>
<circle cx="296.5" cy="152.6" r="0.52" fill="#ffcf7a" opacity="0.93"/>
<circle cx="315.4" cy="159.1" r="0.58" fill="#f0a444" opacity="0.75"/>
<circle cx="316.0" cy="144.2" r="0.47" fill="#ffcf7a" opacity="0.98"/>
<circle cx="314.6" cy="160.1" r="0.56" fill="#ffcf7a" opacity="0.51"/>
<circle cx="299.1" cy="131.9" r="0.43" fill="#ffe8b8" opacity="0.99"/>
<circle cx="290.7" cy="153.6" r="0.36" fill="#ffdc98" opacity="0.61"/>
<circle cx="302.6" cy="145.9" r="0.64" fill="#ffdc98" opacity="0.68"/>
<circle cx="312.6" cy="140.1" r="0.66" fill="#f0a444" opacity="0.64"/>
<circle cx="297.1" cy="157.7" r="0.63" fill="#ffdc98" opacity="0.65"/>
<circle cx="298.8" cy="158.4" r="0.41" fill="#f8b858" opacity="0.75"/>
<circle cx="298.5" cy="138.1" r="0.43" fill="#f0a444" opacity="0.66"/>
<circle cx="298.2" cy="159.2" r="0.46" fill="#ffdc98" opacity="0.79"/>
<circle cx="309.6" cy="153.0" r="0.38" fill="#ffe8b8" opacity="0.96"/>
<circle cx="310.4" cy="148.7" r="0.50" fill="#ffdc98" opacity="0.77"/>
<circle cx="298.0" cy="143.1" r="0.58" fill="#eea040" opacity="0.80"/>
<circle cx="312.8" cy="153.3" r="0.55" fill="#f8b858" opacity="0.81"/>
<circle cx="315.8" cy="155.6" r="0.31" fill="#eea040" opacity="0.89"/>
<circle cx="316.4" cy="158.3" r="0.58" fill="#f8b858" opacity="0.93"/>
<circle cx="301.1" cy="155.9" r="0.47" fill="#ffcf7a" opacity="0.82"/>
<circle cx="296.0" cy="152.2" r="0.63" fill="#ffdc98" opacity="0.89"/>
<circle cx="287.1" cy="142.3" r="0.48" fill="#ffdc98" opacity="0.51"/>
<circle cx="279.8" cy="135.3" r="0.56" fill="#ffdc98" opacity="0.58"/>
<circle cx="305.4" cy="150.8" r="0.49" fill="#eea040" opacity="0.95"/>
<circle cx="311.1" cy="152.1" r="0.57" fill="#ffcf7a" opacity="0.56"/>
<circle cx="311.2" cy="156.7" r="0.49" fill="#ffe8b8" opacity="0.64"/>
<circle cx="310.9" cy="167.4" r="0.37" fill="#eea040" opacity="0.53"/>
<circle cx="304.9" cy="133.8" r="0.59" fill="#eea040" opacity="0.54"/>
<circle cx="297.4" cy="148.1" r="0.57" fill="#ffcf7a" opacity="0.95"/>
<circle cx="309.6" cy="150.6" r="0.31" fill="#ffe8b8" opacity="0.83"/>
<circle cx="318.7" cy="155.9" r="0.59" fill="#ffdc98" opacity="0.58"/>
<circle cx="302.2" cy="146.8" r="0.68" fill="#ffdc98" opacity="0.86"/>
<circle cx="307.1" cy="147.2" r="0.62" fill="#eea040" opacity="0.68"/>
<circle cx="290.3" cy="154.4" r="0.48" fill="#ffe8b8" opacity="0.64"/>
<circle cx="305.3" cy="158.7" r="0.55" fill="#ffe8b8" opacity="0.83"/>
<circle cx="302.3" cy="163.3" r="0.69" fill="#ffe8b8" opacity="0.92"/>
<circle cx="317.6" cy="141.1" r="0.69" fill="#ffdc98" opacity="0.62"/>
<circle cx="303.8" cy="140.2" r="0.66" fill="#f0a444" opacity="0.90"/>
<circle cx="306.2" cy="144.2" r="0.41" fill="#ffcf7a" opacity="0.58"/>
<circle cx="308.5" cy="157.1" r="0.66" fill="#f8b858" opacity="1.00"/>
<circle cx="306.6" cy="170.3" r="0.62" fill="#ffdc98" opacity="0.84"/>
<circle cx="307.2" cy="155.3" r="0.52" fill="#f8b858" opacity="0.90"/>
<circle cx="314.3" cy="137.2" r="0.69" fill="#ffcf7a" opacity="0.65"/>
<circle cx="304.4" cy="142.4" r="0.38" fill="#ffcf7a" opacity="0.63"/>
<circle cx="313.3" cy="141.8" r="0.34" fill="#ffcf7a" opacity="0.90"/>
<circle cx="311.6" cy="164.4" r="0.66" fill="#ffe8b8" opacity="0.94"/>
<circle cx="304.7" cy="160.5" r="0.48" fill="#ffcf7a" opacity="0.84"/>
<circle cx="312.3" cy="162.9" r="0.54" fill="#ffdc98" opacity="0.91"/>
<circle cx="310.4" cy="139.4" r="0.49" fill="#ffdc98" opacity="0.98"/>
<circle cx="305.8" cy="155.4" r="0.64" fill="#f8b858" opacity="0.96"/>
<circle cx="307.4" cy="154.6" r="0.51" fill="#ffcf7a" opacity="0.92"/>
<circle cx="313.0" cy="147.0" r="0.62" fill="#f0a444" opacity="0.85"/>
<circle cx="293.9" cy="160.6" r="0.69" fill="#f8b858" opacity="0.96"/>
<circle cx="308.0" cy="154.9" r="0.48" fill="#ffcf7a" opacity="0.84"/>
<circle cx="309.7" cy="153.3" r="0.54" fill="#ffdc98" opacity="0.94"/>
<circle cx="321.5" cy="148.0" r="0.42" fill="#ffdc98" opacity="0.92"/>
<circle cx="317.0" cy="147.9" r="0.43" fill="#f8b858" opacity="0.86"/>
<circle cx="297.7" cy="139.5" r="0.65" fill="#ffdc98" opacity="0.88"/>
<circle cx="311.7" cy="147.5" r="0.49" fill="#f8b858" opacity="0.94"/>
<circle cx="312.9" cy="154.3" r="0.53" fill="#ffcf7a" opacity="0.98"/>
<circle cx="309.1" cy="151.1" r="0.70" fill="#eea040" opacity="0.94"/>
<circle cx="308.5" cy="145.0" r="0.44" fill="#ffcf7a" opacity="0.86"/>
<circle cx="317.1" cy="149.1" r="0.51" fill="#eea040" opacity="0.92"/>
<circle cx="312.5" cy="156.8" r="0.50" fill="#ffdc98" opacity="0.82"/>
<circle cx="302.9" cy="158.2" r="0.71" fill="#ffcf7a" opacity="0.98"/>
<circle cx="293.9" cy="156.1" r="0.70" fill="#f8b858" opacity="0.83"/>
<circle cx="316.0" cy="157.6" r="0.54" fill="#ffdc98" opacity="0.95"/>
<circle cx="322.3" cy="148.8" r="0.55" fill="#ffcf7a" opacity="0.80"/>
<circle cx="302.3" cy="154.9" r="0.71" fill="#eea040" opacity="0.90"/>
<circle cx="304.1" cy="157.7" r="0.68" fill="#ffdc98" opacity="0.84"/>
<circle cx="304.6" cy="151.7" r="0.73" fill="#ffdc98" opacity="0.85"/>
<circle cx="308.0" cy="154.6" r="0.62" fill="#f8b858" opacity="0.86"/>
<circle cx="307.8" cy="156.4" r="0.57" fill="#f8b858" opacity="0.90"/>
<circle cx="310.2" cy="152.7" r="0.74" fill="#f8b858" opacity="0.93"/>
<circle cx="296.5" cy="148.1" r="0.45" fill="#f0a444" opacity="0.95"/>
<circle cx="303.4" cy="155.3" r="0.49" fill="#ffdc98" opacity="0.85"/>
<circle cx="304.6" cy="167.4" r="0.42" fill="#f0a444" opacity="0.95"/>
<circle cx="313.7" cy="160.9" r="0.57" fill="#ffe8b8" opacity="0.90"/>
<circle cx="308.3" cy="153.3" r="0.72" fill="#f8b858" opacity="0.91"/>
<circle cx="306.8" cy="154.6" r="0.56" fill="#f8b858" opacity="0.86"/>
<circle cx="310.6" cy="156.4" r="0.69" fill="#f8b858" opacity="0.94"/>
<circle cx="298.1" cy="145.2" r="0.74" fill="#f0a444" opacity="0.95"/>
<circle cx="309.6" cy="156.4" r="0.65" fill="#f8b858" opacity="0.93"/>
<circle cx="304.2" cy="150.7" r="0.42" fill="#ffdc98" opacity="0.95"/>
<circle cx="315.8" cy="139.9" r="0.60" fill="#f0a444" opacity="0.87"/>
<circle cx="315.1" cy="141.3" r="0.59" fill="#ffdc98" opacity="0.80"/>
<circle cx="314.4" cy="160.7" r="0.49" fill="#f0a444" opacity="0.91"/>
<circle cx="317.9" cy="155.5" r="0.62" fill="#f0a444" opacity="0.97"/>
<circle cx="301.0" cy="152.1" r="0.60" fill="#eea040" opacity="0.82"/>
<circle cx="308.4" cy="166.2" r="0.75" fill="#ffdc98" opacity="0.96"/>
<circle cx="295.7" cy="146.1" r="0.51" fill="#eea040" opacity="0.82"/>
<circle cx="269.4" cy="117.4" r="0.46" fill="#ffcf7a" opacity="0.46"/>
<circle cx="264.3" cy="121.8" r="0.38" fill="#ffcf7a" opacity="0.82"/>
<circle cx="260.9" cy="122.6" r="0.38" fill="#eea040" opacity="0.83"/>
<circle cx="271.1" cy="116.1" r="0.33" fill="#eea040" opacity="0.84"/>
<circle cx="262.6" cy="123.4" r="0.48" fill="#ffcf7a" opacity="0.79"/>
<circle cx="260.6" cy="122.9" r="0.48" fill="#f8b858" opacity="0.84"/>
<circle cx="274.5" cy="115.7" r="0.58" fill="#eea040" opacity="0.46"/>
<circle cx="265.8" cy="120.4" r="0.46" fill="#ffcf7a" opacity="0.63"/>
<circle cx="278.3" cy="114.9" r="0.40" fill="#ffe8b8" opacity="0.65"/>
<circle cx="282.2" cy="112.0" r="0.55" fill="#ffe8b8" opacity="0.47"/>
<circle cx="261.3" cy="120.7" r="0.56" fill="#ffcf7a" opacity="0.75"/>
<circle cx="267.2" cy="119.1" r="0.43" fill="#ffcf7a" opacity="0.68"/>
<circle cx="262.7" cy="121.8" r="0.60" fill="#ffcf7a" opacity="0.65"/>
<circle cx="282.3" cy="111.3" r="0.31" fill="#f0a444" opacity="0.74"/>
<circle cx="281.2" cy="110.5" r="0.54" fill="#ffcf7a" opacity="0.47"/>
<circle cx="263.1" cy="120.5" r="0.59" fill="#f0a444" opacity="0.58"/>
<circle cx="267.7" cy="120.0" r="0.59" fill="#f0a444" opacity="0.86"/>
<circle cx="257.2" cy="120.9" r="0.43" fill="#f0a444" opacity="0.68"/>
<circle cx="281.6" cy="111.5" r="0.52" fill="#f0a444" opacity="0.78"/>
<circle cx="279.1" cy="111.8" r="0.50" fill="#eea040" opacity="0.54"/>
<circle cx="269.0" cy="118.4" r="0.44" fill="#ffcf7a" opacity="0.82"/>
<circle cx="264.9" cy="122.7" r="0.41" fill="#ffcf7a" opacity="0.71"/>
<circle cx="285.0" cy="115.3" r="0.40" fill="#f0a444" opacity="0.60"/>
<circle cx="267.0" cy="120.2" r="0.53" fill="#ffcf7a" opacity="0.52"/>
<circle cx="273.0" cy="118.0" r="0.46" fill="#f0a444" opacity="0.83"/>
<circle cx="278.7" cy="115.2" r="0.59" fill="#f8b858" opacity="0.78"/>
<circle cx="283.8" cy="118.8" r="0.36" fill="#f0a444" opacity="0.67"/>
<circle cx="288.9" cy="141.9" r="0.46" fill="#eea040" opacity="0.73"/>
<circle cx="294.3" cy="123.1" r="0.49" fill="#eea040" opacity="0.68"/>
<circle cx="283.1" cy="118.3" r="0.56" fill="#ffe8b8" opacity="0.40"/>
<circle cx="284.5" cy="146.7" r="0.47" fill="#f0a444" opacity="0.59"/>
<circle cx="285.5" cy="143.7" r="0.48" fill="#ffdc98" opacity="0.57"/>
<circle cx="286.3" cy="126.0" r="0.41" fill="#ffe8b8" opacity="0.64"/>
<circle cx="285.1" cy="127.1" r="0.40" fill="#ffdc98" opacity="0.75"/>
<circle cx="285.5" cy="132.3" r="0.54" fill="#ffdc98" opacity="0.60"/>
<circle cx="288.4" cy="133.8" r="0.33" fill="#f0a444" opacity="0.81"/>
<circle cx="290.4" cy="122.3" r="0.40" fill="#ffcf7a" opacity="0.84"/>
<circle cx="286.3" cy="114.9" r="0.38" fill="#f0a444" opacity="0.80"/>
<circle cx="290.8" cy="132.3" r="0.60" fill="#ffe8b8" opacity="0.63"/>
<circle cx="284.9" cy="138.7" r="0.43" fill="#ffcf7a" opacity="0.61"/>
<circle cx="285.1" cy="146.2" r="0.50" fill="#ffcf7a" opacity="0.64"/>
<circle cx="285.7" cy="127.9" r="0.45" fill="#ffe8b8" opacity="0.69"/>
<circle cx="287.9" cy="128.3" r="0.42" fill="#ffe8b8" opacity="0.75"/>
<circle cx="288.3" cy="125.7" r="0.46" fill="#f8b858" opacity="0.77"/>
<circle cx="285.4" cy="116.6" r="0.39" fill="#eea040" opacity="0.48"/>
<circle cx="288.8" cy="144.4" r="0.51" fill="#ffe8b8" opacity="0.77"/>
<circle cx="289.0" cy="119.3" r="0.39" fill="#ffe8b8" opacity="0.63"/>
<circle cx="285.3" cy="144.4" r="0.42" fill="#ffe8b8" opacity="0.43"/>
<circle cx="285.1" cy="147.8" r="0.49" fill="#ffdc98" opacity="0.42"/>
<circle cx="285.6" cy="114.4" r="0.30" fill="#ffe8b8" opacity="0.72"/>
<circle cx="289.1" cy="142.6" r="0.48" fill="#f8b858" opacity="0.70"/>
<circle cx="287.1" cy="120.0" r="0.53" fill="#eea040" opacity="0.66"/>
<circle cx="248.7" cy="141.7" r="0.37" fill="#f8b858" opacity="0.77"/>
<circle cx="246.5" cy="142.0" r="0.57" fill="#ffcf7a" opacity="0.55"/>
<circle cx="250.3" cy="148.3" r="0.46" fill="#ffcf7a" opacity="0.69"/>
<circle cx="249.0" cy="151.4" r="0.54" fill="#f8b858" opacity="0.76"/>
<circle cx="247.2" cy="142.2" r="0.39" fill="#ffe8b8" opacity="0.54"/>
<circle cx="246.3" cy="140.2" r="0.37" fill="#ffcf7a" opacity="0.78"/>
<circle cx="250.1" cy="150.1" r="0.64" fill="#ffe8b8" opacity="0.70"/>
<circle cx="248.4" cy="143.5" r="0.38" fill="#ffe8b8" opacity="0.57"/>
<circle cx="248.2" cy="156.1" r="0.59" fill="#ffe8b8" opacity="0.64"/>
<circle cx="246.6" cy="143.8" r="0.61" fill="#ffcf7a" opacity="0.94"/>
<circle cx="247.6" cy="152.7" r="0.38" fill="#eea040" opacity="0.64"/>
<circle cx="248.8" cy="148.2" r="0.58" fill="#f8b858" opacity="0.61"/>
<circle cx="248.1" cy="139.1" r="0.61" fill="#f0a444" opacity="0.68"/>
<circle cx="248.6" cy="141.2" r="0.49" fill="#ffdc98" opacity="0.67"/>
<circle cx="245.6" cy="147.0" r="0.62" fill="#ffdc98" opacity="0.75"/>
<circle cx="244.8" cy="142.6" r="0.40" fill="#ffcf7a" opacity="0.61"/>
<circle cx="278.9" cy="165.8" r="0.58" fill="#f8b858" opacity="0.61"/>
<circle cx="281.3" cy="166.5" r="0.59" fill="#ffdc98" opacity="0.56"/>
<circle cx="272.9" cy="166.3" r="0.38" fill="#f8b858" opacity="0.67"/>
<circle cx="278.4" cy="161.6" r="0.64" fill="#ffdc98" opacity="0.59"/>
<circle cx="276.5" cy="164.9" r="0.46" fill="#eea040" opacity="0.56"/>
<circle cx="283.7" cy="164.9" r="0.45" fill="#ffe8b8" opacity="0.95"/>
<circle cx="279.1" cy="169.8" r="0.37" fill="#ffcf7a" opacity="0.89"/>
<circle cx="278.3" cy="163.6" r="0.60" fill="#ffdc98" opacity="0.83"/>
<circle cx="284.5" cy="166.0" r="0.35" fill="#eea040" opacity="0.51"/>
<circle cx="280.9" cy="166.1" r="0.60" fill="#eea040" opacity="0.64"/>
<circle cx="280.0" cy="164.2" r="0.62" fill="#f0a444" opacity="0.86"/>
<circle cx="281.0" cy="170.2" r="0.33" fill="#eea040" opacity="0.63"/>
<circle cx="276.4" cy="166.9" r="0.60" fill="#eea040" opacity="0.71"/>
<circle cx="284.2" cy="160.3" r="0.35" fill="#ffcf7a" opacity="0.62"/>
<circle cx="274.8" cy="169.7" r="0.54" fill="#ffcf7a" opacity="0.90"/>
<circle cx="276.1" cy="160.4" r="0.39" fill="#f0a444" opacity="0.88"/>
<circle cx="310.4" cy="179.1" r="0.38" fill="#f8b858" opacity="0.74"/>
<circle cx="309.8" cy="177.1" r="0.31" fill="#f8b858" opacity="0.52"/>
<circle cx="308.9" cy="174.3" r="0.52" fill="#eea040" opacity="0.72"/>
<circle cx="308.8" cy="176.4" r="0.35" fill="#ffe8b8" opacity="0.84"/>
<circle cx="307.2" cy="175.0" r="0.50" fill="#ffcf7a" opacity="0.73"/>
<circle cx="308.0" cy="171.1" r="0.53" fill="#ffcf7a" opacity="0.76"/>
<circle cx="308.7" cy="178.8" r="0.59" fill="#ffcf7a" opacity="0.77"/>
<circle cx="309.0" cy="177.9" r="0.36" fill="#eea040" opacity="0.87"/>
<circle cx="308.7" cy="179.1" r="0.60" fill="#f8b858" opacity="0.75"/>
<circle cx="271.9" cy="188.8" r="0.63" fill="#f0a444" opacity="0.59"/>
<circle cx="269.6" cy="187.5" r="0.59" fill="#ffdc98" opacity="0.68"/>
<circle cx="257.8" cy="185.1" r="0.37" fill="#f8b858" opacity="0.70"/>
<circle cx="266.5" cy="187.3" r="0.63" fill="#ffe8b8" opacity="0.77"/>
<circle cx="267.3" cy="188.8" r="0.64" fill="#ffe8b8" opacity="0.69"/>
<circle cx="274.5" cy="188.6" r="0.36" fill="#ffcf7a" opacity="0.56"/>
<circle cx="282.4" cy="189.7" r="0.35" fill="#eea040" opacity="0.72"/>
<circle cx="271.9" cy="185.0" r="0.30" fill="#f8b858" opacity="0.71"/>
<circle cx="268.0" cy="191.2" r="0.40" fill="#f8b858" opacity="0.80"/>
<circle cx="264.8" cy="187.4" r="0.52" fill="#ffdc98" opacity="0.45"/>
<circle cx="264.7" cy="189.1" r="0.53" fill="#ffdc98" opacity="0.67"/>
<circle cx="263.4" cy="190.4" r="0.37" fill="#ffcf7a" opacity="0.71"/>
<circle cx="261.8" cy="187.9" r="0.32" fill="#f8b858" opacity="0.53"/>
<circle cx="270.1" cy="190.7" r="0.64" fill="#ffdc98" opacity="0.47"/>
<circle cx="270.3" cy="186.6" r="0.36" fill="#ffcf7a" opacity="0.43"/>
<circle cx="268.1" cy="181.9" r="0.47" fill="#f0a444" opacity="0.74"/>
<circle cx="270.3" cy="192.3" r="0.34" fill="#ffdc98" opacity="0.62"/>
<circle cx="266.0" cy="184.5" r="0.41" fill="#ffcf7a" opacity="0.56"/>
<circle cx="267.8" cy="186.8" r="0.63" fill="#f0a444" opacity="0.69"/>
<circle cx="260.4" cy="188.4" r="0.56" fill="#ffdc98" opacity="0.41"/>
<circle cx="283.3" cy="197.9" r="0.34" fill="#eea040" opacity="0.49"/>
<circle cx="281.5" cy="198.7" r="0.47" fill="#f0a444" opacity="0.52"/>
<circle cx="292.6" cy="194.9" r="0.37" fill="#f8b858" opacity="0.37"/>
<circle cx="290.0" cy="195.2" r="0.47" fill="#ffcf7a" opacity="0.37"/>
<circle cx="283.5" cy="199.8" r="0.48" fill="#ffdc98" opacity="0.60"/>
<circle cx="290.6" cy="201.0" r="0.40" fill="#f8b858" opacity="0.45"/>
<circle cx="319.2" cy="200.1" r="0.43" fill="#f8b858" opacity="0.34"/>
<circle cx="329.7" cy="197.7" r="0.49" fill="#ffcf7a" opacity="0.33"/>
<circle cx="337.4" cy="198.0" r="0.34" fill="#ffcf7a" opacity="0.41"/>
<circle cx="322.6" cy="199.2" r="0.46" fill="#f0a444" opacity="0.43"/>
<circle cx="316.8" cy="196.9" r="0.44" fill="#ffcf7a" opacity="0.57"/>
<circle cx="331.2" cy="191.9" r="0.47" fill="#f8b858" opacity="0.57"/>
<circle cx="334.5" cy="195.8" r="0.46" fill="#ffe8b8" opacity="0.50"/>
<circle cx="330.5" cy="196.4" r="0.36" fill="#ffe8b8" opacity="0.44"/>
<circle cx="327.2" cy="242.8" r="0.54" fill="#ffe8b8" opacity="0.68"/>
<circle cx="307.9" cy="242.1" r="0.48" fill="#eea040" opacity="0.43"/>
<circle cx="333.6" cy="228.3" r="0.54" fill="#eea040" opacity="0.49"/>
<circle cx="338.2" cy="240.1" r="0.43" fill="#f8b858" opacity="0.55"/>
<circle cx="341.7" cy="233.0" r="0.47" fill="#ffe8b8" opacity="0.36"/>
<circle cx="343.0" cy="224.6" r="0.40" fill="#ffe8b8" opacity="0.51"/>
<circle cx="334.3" cy="225.9" r="0.36" fill="#f8b858" opacity="0.69"/>
<circle cx="325.6" cy="227.7" r="0.52" fill="#ffcf7a" opacity="0.40"/>
<circle cx="320.1" cy="235.0" r="0.48" fill="#ffdc98" opacity="0.39"/>
<circle cx="339.9" cy="232.3" r="0.33" fill="#ffe8b8" opacity="0.51"/>
<circle cx="338.8" cy="218.5" r="0.47" fill="#f8b858" opacity="0.62"/>
<circle cx="311.6" cy="236.8" r="0.48" fill="#ffcf7a" opacity="0.60"/>
<circle cx="309.6" cy="218.5" r="0.43" fill="#eea040" opacity="0.48"/>
<circle cx="298.4" cy="227.7" r="0.54" fill="#ffcf7a" opacity="0.53"/>
<circle cx="327.0" cy="238.9" r="0.31" fill="#f0a444" opacity="0.39"/>
<circle cx="339.0" cy="241.5" r="0.54" fill="#ffcf7a" opacity="0.48"/>
<circle cx="327.2" cy="229.1" r="0.52" fill="#f8b858" opacity="0.55"/>
<circle cx="308.8" cy="216.6" r="0.52" fill="#eea040" opacity="0.37"/>
<circle cx="310.8" cy="237.9" r="0.48" fill="#f0a444" opacity="0.30"/>
<circle cx="302.3" cy="235.9" r="0.48" fill="#eea040" opacity="0.68"/>
<circle cx="305.7" cy="233.8" r="0.37" fill="#f0a444" opacity="0.41"/>
<circle cx="304.3" cy="255.8" r="0.49" fill="#f0a444" opacity="0.50"/>
<circle cx="302.8" cy="243.7" r="0.30" fill="#ffdc98" opacity="0.60"/>
<circle cx="307.0" cy="255.7" r="0.32" fill="#f8b858" opacity="0.54"/>
<circle cx="304.3" cy="268.9" r="0.47" fill="#f8b858" opacity="0.50"/>
<circle cx="308.7" cy="246.9" r="0.50" fill="#f0a444" opacity="0.53"/>
<circle cx="303.0" cy="255.7" r="0.37" fill="#ffe8b8" opacity="0.35"/>
<circle cx="303.9" cy="251.2" r="0.47" fill="#ffe8b8" opacity="0.32"/>
<circle cx="304.1" cy="260.9" r="0.38" fill="#f8b858" opacity="0.44"/>
<circle cx="370.0" cy="285.3" r="0.37" fill="#ffe8b8" opacity="0.78"/>
<circle cx="372.8" cy="293.6" r="0.36" fill="#ffe8b8" opacity="0.75"/>
<circle cx="384.3" cy="284.6" r="0.55" fill="#f0a444" opacity="0.68"/>
<circle cx="377.1" cy="281.9" r="0.41" fill="#ffe8b8" opacity="0.35"/>
<circle cx="377.3" cy="283.0" r="0.37" fill="#ffe8b8" opacity="0.74"/>
<circle cx="381.6" cy="291.8" r="0.50" fill="#f0a444" opacity="0.47"/>
<circle cx="382.3" cy="307.9" r="0.41" fill="#ffe8b8" opacity="0.61"/>
<circle cx="390.6" cy="309.0" r="0.31" fill="#ffcf7a" opacity="0.60"/>
<circle cx="374.3" cy="296.4" r="0.49" fill="#f0a444" opacity="0.64"/>
<circle cx="371.1" cy="291.2" r="0.37" fill="#f8b858" opacity="0.71"/>
<circle cx="367.3" cy="285.5" r="0.53" fill="#ffe8b8" opacity="0.68"/>
<circle cx="374.8" cy="291.2" r="0.56" fill="#f0a444" opacity="0.67"/>
<circle cx="376.2" cy="293.9" r="0.40" fill="#ffdc98" opacity="0.79"/>
<circle cx="383.7" cy="273.2" r="0.54" fill="#f8b858" opacity="0.80"/>
<circle cx="380.6" cy="288.6" r="0.56" fill="#ffdc98" opacity="0.55"/>
<circle cx="381.7" cy="278.4" r="0.58" fill="#f8b858" opacity="0.61"/>
<circle cx="389.4" cy="286.1" r="0.52" fill="#f0a444" opacity="0.60"/>
<circle cx="387.5" cy="292.1" r="0.58" fill="#f0a444" opacity="0.61"/>
<circle cx="383.3" cy="269.9" r="0.41" fill="#ffdc98" opacity="0.70"/>
<circle cx="369.5" cy="285.2" r="0.55" fill="#f8b858" opacity="0.49"/>
<circle cx="363.2" cy="287.1" r="0.31" fill="#f0a444" opacity="0.42"/>
<circle cx="387.1" cy="288.1" r="0.31" fill="#ffe8b8" opacity="0.55"/>
<circle cx="382.6" cy="286.3" r="0.33" fill="#ffcf7a" opacity="0.46"/>
<circle cx="390.2" cy="297.2" r="0.32" fill="#ffe8b8" opacity="0.71"/>
<circle cx="402.4" cy="256.5" r="0.35" fill="#ffcf7a" opacity="0.51"/>
<circle cx="403.9" cy="250.8" r="0.35" fill="#eea040" opacity="0.43"/>
<circle cx="399.5" cy="263.7" r="0.45" fill="#f8b858" opacity="0.62"/>
<circle cx="403.4" cy="262.8" r="0.31" fill="#f0a444" opacity="0.55"/>
<circle cx="403.7" cy="260.4" r="0.40" fill="#ffcf7a" opacity="0.68"/>
<circle cx="397.1" cy="262.3" r="0.46" fill="#ffdc98" opacity="0.43"/>
<circle cx="403.3" cy="251.9" r="0.38" fill="#f8b858" opacity="0.34"/>
<circle cx="400.9" cy="259.5" r="0.51" fill="#f0a444" opacity="0.44"/>
<circle cx="362.0" cy="307.6" r="0.45" fill="#eea040" opacity="0.52"/>
<circle cx="358.9" cy="317.2" r="0.36" fill="#eea040" opacity="0.55"/>
<circle cx="355.2" cy="311.0" r="0.46" fill="#ffe8b8" opacity="0.56"/>
<circle cx="356.2" cy="316.4" r="0.37" fill="#f0a444" opacity="0.51"/>
<circle cx="355.2" cy="312.4" r="0.42" fill="#f0a444" opacity="0.56"/>
<circle cx="356.5" cy="315.3" r="0.40" fill="#ffcf7a" opacity="0.69"/>
<circle cx="361.7" cy="310.6" r="0.44" fill="#f8b858" opacity="0.38"/>
<circle cx="354.2" cy="311.7" r="0.48" fill="#eea040" opacity="0.66"/>
</g>
<g filter="url(#b1)">
<circle cx="273.5" cy="119.3" r="0.42" fill="#ffe8b8" opacity="0.33"/>
<circle cx="252.6" cy="151.7" r="0.48" fill="#ffcf7a" opacity="0.39"/>
<circle cx="283.5" cy="113.2" r="0.30" fill="#ffe8b8" opacity="0.47"/>
<circle cx="255.3" cy="124.7" r="0.42" fill="#ffe8b8" opacity="0.68"/>
<circle cx="264.1" cy="149.7" r="0.31" fill="#ffe8b8" opacity="0.47"/>
<circle cx="254.7" cy="131.1" r="0.46" fill="#ffe8b8" opacity="0.37"/>
<circle cx="295.4" cy="154.4" r="0.39" fill="#f0a444" opacity="0.51"/>
<circle cx="276.9" cy="126.6" r="0.32" fill="#ffcf7a" opacity="0.61"/>
<circle cx="296.3" cy="147.4" r="0.47" fill="#f0a444" opacity="0.59"/>
<circle cx="290.6" cy="120.4" r="0.36" fill="#ffdc98" opacity="0.67"/>
<circle cx="313.6" cy="151.0" r="0.47" fill="#eea040" opacity="0.43"/>
<circle cx="275.9" cy="145.3" r="0.46" fill="#ffcf7a" opacity="0.33"/>
<circle cx="330.0" cy="143.6" r="0.43" fill="#eea040" opacity="0.32"/>
<circle cx="272.2" cy="151.3" r="0.43" fill="#eea040" opacity="0.48"/>
<circle cx="279.1" cy="158.1" r="0.28" fill="#f8b858" opacity="0.48"/>
<circle cx="299.6" cy="145.0" r="0.33" fill="#eea040" opacity="0.41"/>
<circle cx="266.5" cy="137.3" r="0.47" fill="#ffdc98" opacity="0.33"/>
<circle cx="280.5" cy="128.8" r="0.31" fill="#ffe8b8" opacity="0.47"/>
<circle cx="269.3" cy="139.1" r="0.36" fill="#f8b858" opacity="0.65"/>
<circle cx="257.7" cy="121.2" r="0.33" fill="#ffdc98" opacity="0.39"/>
<circle cx="269.7" cy="118.9" r="0.40" fill="#f0a444" opacity="0.54"/>
<circle cx="290.9" cy="154.3" r="0.43" fill="#eea040" opacity="0.32"/>
<circle cx="316.6" cy="137.4" r="0.37" fill="#eea040" opacity="0.34"/>
<circle cx="280.4" cy="122.3" r="0.50" fill="#ffcf7a" opacity="0.48"/>
<circle cx="253.2" cy="135.3" r="0.29" fill="#ffe8b8" opacity="0.65"/>
<circle cx="278.2" cy="155.6" r="0.49" fill="#ffdc98" opacity="0.54"/>
<circle cx="288.0" cy="114.4" r="0.30" fill="#f0a444" opacity="0.44"/>
<circle cx="287.6" cy="159.9" r="0.39" fill="#ffe8b8" opacity="0.38"/>
<circle cx="276.9" cy="159.8" r="0.48" fill="#f0a444" opacity="0.60"/>
<circle cx="277.4" cy="120.5" r="0.45" fill="#ffe8b8" opacity="0.51"/>
<circle cx="274.0" cy="124.7" r="0.46" fill="#f8b858" opacity="0.69"/>
<circle cx="291.1" cy="134.7" r="0.29" fill="#f0a444" opacity="0.31"/>
<circle cx="287.0" cy="122.5" r="0.41" fill="#eea040" opacity="0.44"/>
<circle cx="277.2" cy="124.5" r="0.33" fill="#f8b858" opacity="0.38"/>
<circle cx="302.5" cy="170.6" r="0.31" fill="#eea040" opacity="0.46"/>
<circle cx="312.3" cy="143.9" r="0.32" fill="#f0a444" opacity="0.62"/>
<circle cx="309.7" cy="142.7" r="0.44" fill="#f8b858" opacity="0.33"/>
<circle cx="303.8" cy="134.3" r="0.40" fill="#ffcf7a" opacity="0.35"/>
<circle cx="316.7" cy="162.5" r="0.30" fill="#f8b858" opacity="0.60"/>
<circle cx="266.9" cy="130.0" r="0.33" fill="#f0a444" opacity="0.53"/>
<circle cx="318.2" cy="146.8" r="0.46" fill="#f8b858" opacity="0.65"/>
<circle cx="292.4" cy="147.3" r="0.28" fill="#f8b858" opacity="0.48"/>
<circle cx="299.4" cy="166.2" r="0.31" fill="#ffe8b8" opacity="0.36"/>
<circle cx="310.0" cy="149.7" r="0.35" fill="#ffe8b8" opacity="0.51"/>
<circle cx="287.9" cy="166.2" r="0.47" fill="#f8b858" opacity="0.32"/>
<circle cx="290.2" cy="150.1" r="0.45" fill="#ffdc98" opacity="0.66"/>
<circle cx="269.2" cy="146.1" r="0.46" fill="#f8b858" opacity="0.50"/>
<circle cx="307.6" cy="173.7" r="0.49" fill="#ffe8b8" opacity="0.40"/>
<circle cx="284.7" cy="139.2" r="0.37" fill="#eea040" opacity="0.43"/>
<circle cx="304.9" cy="166.8" r="0.48" fill="#eea040" opacity="0.36"/>
<circle cx="302.6" cy="135.5" r="0.34" fill="#ffdc98" opacity="0.35"/>
<circle cx="280.2" cy="144.5" r="0.50" fill="#f8b858" opacity="0.63"/>
<circle cx="280.7" cy="139.6" r="0.36" fill="#f0a444" opacity="0.34"/>
<circle cx="284.1" cy="109.4" r="0.35" fill="#ffe8b8" opacity="0.55"/>
<circle cx="280.9" cy="148.2" r="0.39" fill="#f0a444" opacity="0.50"/>
<circle cx="306.6" cy="139.9" r="0.30" fill="#eea040" opacity="0.68"/>
<circle cx="252.1" cy="127.5" r="0.41" fill="#f0a444" opacity="0.39"/>
<circle cx="322.5" cy="142.0" r="0.35" fill="#f0a444" opacity="0.52"/>
<circle cx="308.6" cy="178.4" r="0.49" fill="#f8b858" opacity="0.40"/>
<circle cx="262.4" cy="131.4" r="0.35" fill="#f0a444" opacity="0.60"/>
<circle cx="284.6" cy="158.4" r="0.34" fill="#f0a444" opacity="0.62"/>
<circle cx="290.8" cy="126.4" r="0.38" fill="#eea040" opacity="0.56"/>
<circle cx="283.3" cy="145.1" r="0.46" fill="#ffe8b8" opacity="0.46"/>
<circle cx="272.0" cy="124.1" r="0.33" fill="#eea040" opacity="0.38"/>
<circle cx="283.2" cy="112.2" r="0.43" fill="#ffe8b8" opacity="0.45"/>
<circle cx="266.0" cy="130.0" r="0.38" fill="#ffdc98" opacity="0.36"/>
<circle cx="260.6" cy="133.1" r="0.30" fill="#eea040" opacity="0.41"/>
<circle cx="262.3" cy="145.9" r="0.28" fill="#ffcf7a" opacity="0.41"/>
<circle cx="257.1" cy="152.0" r="0.37" fill="#eea040" opacity="0.42"/>
<circle cx="265.2" cy="151.9" r="0.40" fill="#eea040" opacity="0.60"/>
<circle cx="298.3" cy="165.3" r="0.44" fill="#f0a444" opacity="0.50"/>
<circle cx="309.9" cy="156.2" r="0.29" fill="#ffe8b8" opacity="0.63"/>
<circle cx="301.1" cy="163.0" r="0.46" fill="#ffe8b8" opacity="0.36"/>
<circle cx="312.5" cy="150.6" r="0.46" fill="#eea040" opacity="0.31"/>
<circle cx="306.1" cy="160.0" r="0.33" fill="#f8b858" opacity="0.31"/>
<circle cx="278.3" cy="141.9" r="0.29" fill="#ffe8b8" opacity="0.31"/>
<circle cx="305.9" cy="144.7" r="0.28" fill="#eea040" opacity="0.62"/>
<circle cx="252.4" cy="147.4" r="0.44" fill="#ffcf7a" opacity="0.49"/>
<circle cx="303.1" cy="142.5" r="0.47" fill="#eea040" opacity="0.33"/>
<circle cx="298.6" cy="132.9" r="0.42" fill="#ffe8b8" opacity="0.58"/>
<circle cx="305.2" cy="159.9" r="0.43" fill="#ffe8b8" opacity="0.42"/>
<circle cx="270.0" cy="142.9" r="0.45" fill="#ffe8b8" opacity="0.70"/>
<circle cx="285.8" cy="169.5" r="0.49" fill="#f0a444" opacity="0.48"/>
<circle cx="267.8" cy="135.0" r="0.41" fill="#f0a444" opacity="0.55"/>
<circle cx="285.0" cy="130.6" r="0.31" fill="#f0a444" opacity="0.44"/>
<circle cx="255.0" cy="132.8" r="0.35" fill="#ffdc98" opacity="0.44"/>
<circle cx="308.9" cy="175.6" r="0.34" fill="#ffdc98" opacity="0.45"/>
<circle cx="304.2" cy="155.6" r="0.31" fill="#ffdc98" opacity="0.69"/>
<circle cx="290.5" cy="122.2" r="0.36" fill="#ffcf7a" opacity="0.68"/>
<circle cx="317.9" cy="155.3" r="0.48" fill="#ffe8b8" opacity="0.68"/>
<circle cx="311.4" cy="155.7" r="0.67" fill="#ffe8b8" opacity="0.71"/>
<circle cx="310.3" cy="138.3" r="0.41" fill="#ffe8b8" opacity="0.52"/>
<circle cx="319.1" cy="159.7" r="0.44" fill="#eea040" opacity="0.65"/>
<circle cx="308.8" cy="138.2" r="0.46" fill="#ffdc98" opacity="0.62"/>
<circle cx="299.2" cy="148.6" r="0.37" fill="#f8b858" opacity="0.58"/>
<circle cx="289.0" cy="151.9" r="0.52" fill="#f0a444" opacity="0.73"/>
<circle cx="322.6" cy="151.8" r="0.36" fill="#ffcf7a" opacity="0.60"/>
<circle cx="316.7" cy="162.8" r="0.43" fill="#ffe8b8" opacity="0.68"/>
<circle cx="310.7" cy="153.8" r="0.65" fill="#eea040" opacity="0.69"/>
<circle cx="298.9" cy="150.6" r="0.44" fill="#f0a444" opacity="0.53"/>
<circle cx="300.3" cy="148.0" r="0.57" fill="#f8b858" opacity="0.76"/>
<circle cx="297.6" cy="161.1" r="0.47" fill="#ffcf7a" opacity="0.66"/>
<circle cx="318.4" cy="159.2" r="0.61" fill="#ffe8b8" opacity="0.90"/>
<circle cx="305.5" cy="152.2" r="0.67" fill="#ffe8b8" opacity="0.96"/>
<circle cx="310.1" cy="156.6" r="0.36" fill="#eea040" opacity="0.76"/>
<circle cx="303.3" cy="134.5" r="0.66" fill="#ffcf7a" opacity="0.54"/>
<circle cx="316.0" cy="152.0" r="0.53" fill="#eea040" opacity="0.52"/>
<circle cx="308.0" cy="156.7" r="0.40" fill="#eea040" opacity="0.82"/>
<circle cx="310.5" cy="147.7" r="0.42" fill="#f8b858" opacity="0.97"/>
<circle cx="303.8" cy="156.4" r="0.54" fill="#f0a444" opacity="0.51"/>
<circle cx="319.3" cy="151.8" r="0.43" fill="#f8b858" opacity="0.92"/>
<circle cx="301.7" cy="153.1" r="0.40" fill="#eea040" opacity="0.98"/>
<circle cx="307.7" cy="149.4" r="0.38" fill="#eea040" opacity="0.94"/>
<circle cx="302.2" cy="155.5" r="0.57" fill="#f8b858" opacity="0.96"/>
<circle cx="292.3" cy="152.6" r="0.59" fill="#ffdc98" opacity="0.68"/>
<circle cx="309.1" cy="140.8" r="0.38" fill="#f0a444" opacity="0.98"/>
<circle cx="310.8" cy="145.8" r="0.49" fill="#f0a444" opacity="0.63"/>
<circle cx="291.1" cy="139.1" r="0.49" fill="#ffcf7a" opacity="0.96"/>
<circle cx="316.1" cy="150.3" r="0.46" fill="#ffe8b8" opacity="0.61"/>
<circle cx="312.4" cy="154.4" r="0.32" fill="#eea040" opacity="0.70"/>
<circle cx="323.9" cy="141.7" r="0.70" fill="#f0a444" opacity="0.97"/>
<circle cx="316.1" cy="164.9" r="0.51" fill="#f0a444" opacity="0.73"/>
<circle cx="304.3" cy="144.0" r="0.45" fill="#f8b858" opacity="0.67"/>
<circle cx="313.6" cy="154.4" r="0.33" fill="#ffcf7a" opacity="0.71"/>
<circle cx="292.0" cy="146.0" r="0.45" fill="#f0a444" opacity="0.88"/>
<circle cx="315.4" cy="142.9" r="0.32" fill="#f0a444" opacity="0.74"/>
<circle cx="297.9" cy="149.3" r="0.43" fill="#ffdc98" opacity="0.87"/>
<circle cx="321.6" cy="153.8" r="0.62" fill="#ffcf7a" opacity="0.88"/>
<circle cx="300.9" cy="159.5" r="0.62" fill="#f8b858" opacity="0.53"/>
<circle cx="305.1" cy="158.4" r="0.68" fill="#f0a444" opacity="0.81"/>
<circle cx="309.6" cy="137.5" r="0.67" fill="#eea040" opacity="0.65"/>
<circle cx="291.7" cy="135.0" r="0.31" fill="#ffdc98" opacity="0.62"/>
<circle cx="307.2" cy="141.6" r="0.61" fill="#ffdc98" opacity="0.89"/>
<circle cx="312.4" cy="147.3" r="0.50" fill="#eea040" opacity="0.50"/>
<circle cx="304.2" cy="165.8" r="0.36" fill="#f0a444" opacity="0.62"/>
<circle cx="290.5" cy="156.1" r="0.54" fill="#ffdc98" opacity="0.76"/>
<circle cx="310.2" cy="144.8" r="0.33" fill="#ffe8b8" opacity="0.52"/>
<circle cx="303.5" cy="150.4" r="0.47" fill="#ffcf7a" opacity="0.55"/>
<circle cx="309.5" cy="156.0" r="0.34" fill="#eea040" opacity="0.75"/>
<circle cx="317.0" cy="151.0" r="0.35" fill="#eea040" opacity="0.73"/>
<circle cx="311.4" cy="163.8" r="0.61" fill="#f0a444" opacity="0.88"/>
<circle cx="306.0" cy="163.8" r="0.45" fill="#f8b858" opacity="0.87"/>
<circle cx="303.2" cy="154.3" r="0.39" fill="#ffe8b8" opacity="0.64"/>
<circle cx="311.6" cy="155.2" r="0.40" fill="#ffe8b8" opacity="0.62"/>
<circle cx="289.9" cy="128.1" r="0.34" fill="#f8b858" opacity="0.74"/>
<circle cx="319.3" cy="154.0" r="0.35" fill="#ffe8b8" opacity="0.59"/>
<circle cx="311.6" cy="155.5" r="0.51" fill="#ffe8b8" opacity="0.59"/>
<circle cx="308.8" cy="168.4" r="0.68" fill="#ffe8b8" opacity="0.55"/>
<circle cx="307.3" cy="143.5" r="0.31" fill="#ffcf7a" opacity="0.67"/>
<circle cx="312.5" cy="159.0" r="0.54" fill="#f8b858" opacity="0.83"/>
<circle cx="318.4" cy="135.9" r="0.46" fill="#ffe8b8" opacity="0.69"/>
<circle cx="307.0" cy="157.9" r="0.62" fill="#ffcf7a" opacity="0.77"/>
<circle cx="292.8" cy="161.2" r="0.57" fill="#ffe8b8" opacity="0.58"/>
<circle cx="315.8" cy="155.1" r="0.58" fill="#f0a444" opacity="0.70"/>
<circle cx="304.1" cy="143.4" r="0.32" fill="#f0a444" opacity="0.87"/>
<circle cx="308.1" cy="152.9" r="0.61" fill="#eea040" opacity="0.90"/>
<circle cx="310.4" cy="153.0" r="0.66" fill="#ffcf7a" opacity="0.71"/>
<circle cx="290.2" cy="162.9" r="0.48" fill="#ffcf7a" opacity="0.58"/>
<circle cx="316.0" cy="153.7" r="0.62" fill="#ffe8b8" opacity="0.70"/>
<circle cx="302.0" cy="145.6" r="0.50" fill="#f0a444" opacity="0.57"/>
<circle cx="313.7" cy="157.0" r="0.33" fill="#f8b858" opacity="0.69"/>
<circle cx="303.0" cy="169.2" r="0.32" fill="#f0a444" opacity="0.96"/>
<circle cx="291.0" cy="165.3" r="0.55" fill="#f8b858" opacity="0.91"/>
<circle cx="295.6" cy="137.5" r="0.55" fill="#f8b858" opacity="0.81"/>
<circle cx="313.5" cy="146.7" r="0.39" fill="#ffe8b8" opacity="0.70"/>
<circle cx="316.0" cy="159.5" r="0.36" fill="#f8b858" opacity="0.99"/>
<circle cx="324.3" cy="155.1" r="0.60" fill="#f0a444" opacity="0.52"/>
<circle cx="294.6" cy="147.9" r="0.42" fill="#ffe8b8" opacity="0.71"/>
<circle cx="310.1" cy="161.4" r="0.45" fill="#f8b858" opacity="0.75"/>
<circle cx="325.8" cy="153.9" r="0.50" fill="#ffe8b8" opacity="0.62"/>
<circle cx="312.4" cy="141.7" r="0.37" fill="#ffcf7a" opacity="0.74"/>
<circle cx="319.9" cy="155.7" r="0.45" fill="#ffe8b8" opacity="0.90"/>
<circle cx="306.7" cy="151.8" r="0.55" fill="#eea040" opacity="0.54"/>
<circle cx="302.8" cy="166.0" r="0.33" fill="#ffdc98" opacity="0.88"/>
<circle cx="298.4" cy="138.4" r="0.31" fill="#ffe8b8" opacity="0.53"/>
<circle cx="307.6" cy="134.7" r="0.38" fill="#ffdc98" opacity="0.99"/>
<circle cx="305.1" cy="168.9" r="0.62" fill="#eea040" opacity="0.84"/>
<circle cx="313.8" cy="150.5" r="0.44" fill="#f8b858" opacity="0.88"/>
<circle cx="302.9" cy="163.7" r="0.66" fill="#f0a444" opacity="0.73"/>
<circle cx="284.2" cy="151.7" r="0.38" fill="#ffe8b8" opacity="0.63"/>
<circle cx="310.9" cy="161.1" r="0.38" fill="#eea040" opacity="0.70"/>
<circle cx="326.0" cy="146.4" r="0.66" fill="#f0a444" opacity="0.58"/>
<circle cx="320.6" cy="159.7" r="0.55" fill="#ffdc98" opacity="0.68"/>
<circle cx="295.8" cy="147.7" r="0.65" fill="#ffe8b8" opacity="0.55"/>
<circle cx="302.1" cy="145.1" r="0.62" fill="#f0a444" opacity="0.63"/>
<circle cx="300.4" cy="147.8" r="0.61" fill="#f8b858" opacity="0.72"/>
<circle cx="288.3" cy="136.1" r="0.42" fill="#f0a444" opacity="0.76"/>
<circle cx="288.8" cy="131.0" r="0.53" fill="#f0a444" opacity="0.83"/>
<circle cx="308.0" cy="136.3" r="0.39" fill="#eea040" opacity="0.65"/>
<circle cx="297.4" cy="156.7" r="0.66" fill="#f8b858" opacity="0.57"/>
<circle cx="307.3" cy="150.1" r="0.32" fill="#f0a444" opacity="0.78"/>
<circle cx="318.5" cy="157.5" r="0.39" fill="#ffe8b8" opacity="0.79"/>
<circle cx="317.3" cy="158.8" r="0.63" fill="#ffcf7a" opacity="0.58"/>
<circle cx="317.9" cy="149.2" r="0.36" fill="#eea040" opacity="0.55"/>
<circle cx="307.4" cy="169.2" r="0.69" fill="#ffe8b8" opacity="0.53"/>
<circle cx="322.1" cy="144.0" r="0.53" fill="#ffe8b8" opacity="0.80"/>
<circle cx="309.1" cy="144.9" r="0.66" fill="#ffe8b8" opacity="0.52"/>
<circle cx="317.3" cy="153.0" r="0.36" fill="#ffcf7a" opacity="0.96"/>
<circle cx="324.5" cy="152.9" r="0.68" fill="#f8b858" opacity="0.57"/>
<circle cx="293.6" cy="150.4" r="0.56" fill="#ffe8b8" opacity="0.71"/>
<circle cx="314.5" cy="159.3" r="0.42" fill="#eea040" opacity="0.52"/>
<circle cx="313.8" cy="137.3" r="0.30" fill="#eea040" opacity="0.92"/>
<circle cx="314.0" cy="150.0" r="0.56" fill="#ffcf7a" opacity="0.59"/>
<circle cx="308.8" cy="165.6" r="0.35" fill="#eea040" opacity="0.95"/>
<circle cx="318.4" cy="149.4" r="0.32" fill="#eea040" opacity="0.82"/>
<circle cx="291.3" cy="158.5" r="0.51" fill="#eea040" opacity="0.63"/>
<circle cx="332.0" cy="143.3" r="0.33" fill="#f8b858" opacity="0.75"/>
<circle cx="309.5" cy="159.0" r="0.60" fill="#eea040" opacity="0.97"/>
<circle cx="316.5" cy="148.8" r="0.46" fill="#ffdc98" opacity="0.80"/>
<circle cx="323.6" cy="144.6" r="0.58" fill="#ffe8b8" opacity="0.83"/>
<circle cx="288.4" cy="155.5" r="0.58" fill="#ffdc98" opacity="0.93"/>
<circle cx="318.1" cy="150.1" r="0.65" fill="#ffdc98" opacity="0.89"/>
<circle cx="306.7" cy="149.3" r="0.66" fill="#ffcf7a" opacity="0.57"/>
<circle cx="309.1" cy="149.7" r="0.36" fill="#ffcf7a" opacity="0.82"/>
<circle cx="303.9" cy="137.3" r="0.33" fill="#f0a444" opacity="0.80"/>
<circle cx="293.4" cy="149.0" r="0.65" fill="#eea040" opacity="0.88"/>
<circle cx="315.1" cy="150.5" r="0.38" fill="#ffcf7a" opacity="0.56"/>
<circle cx="310.1" cy="147.9" r="0.60" fill="#ffdc98" opacity="0.82"/>
<circle cx="314.2" cy="154.5" r="0.60" fill="#f0a444" opacity="0.60"/>
<circle cx="305.4" cy="158.3" r="0.44" fill="#ffcf7a" opacity="0.97"/>
<circle cx="307.6" cy="143.1" r="0.43" fill="#ffe8b8" opacity="0.98"/>
<circle cx="300.6" cy="153.2" r="0.60" fill="#ffcf7a" opacity="0.89"/>
<circle cx="291.8" cy="158.4" r="0.44" fill="#ffe8b8" opacity="0.85"/>
<circle cx="293.3" cy="145.9" r="0.63" fill="#f0a444" opacity="0.79"/>
<circle cx="310.3" cy="152.4" r="0.38" fill="#ffcf7a" opacity="0.88"/>
<circle cx="323.4" cy="152.3" r="0.50" fill="#f8b858" opacity="0.90"/>
<circle cx="325.1" cy="149.4" r="0.68" fill="#ffe8b8" opacity="0.76"/>
<circle cx="318.8" cy="149.3" r="0.39" fill="#ffdc98" opacity="0.85"/>
<circle cx="311.4" cy="141.0" r="0.70" fill="#ffcf7a" opacity="0.78"/>
<circle cx="302.5" cy="145.6" r="0.46" fill="#eea040" opacity="0.70"/>
<circle cx="317.7" cy="153.0" r="0.41" fill="#ffe8b8" opacity="0.95"/>
<circle cx="291.2" cy="135.3" r="0.35" fill="#eea040" opacity="0.80"/>
<circle cx="310.3" cy="138.3" r="0.44" fill="#f8b858" opacity="0.66"/>
<circle cx="318.5" cy="144.3" r="0.52" fill="#ffdc98" opacity="0.66"/>
<circle cx="291.6" cy="158.1" r="0.53" fill="#ffdc98" opacity="0.56"/>
<circle cx="298.9" cy="140.5" r="0.50" fill="#eea040" opacity="0.63"/>
<circle cx="317.4" cy="140.3" r="0.59" fill="#eea040" opacity="0.99"/>
<circle cx="303.5" cy="162.2" r="0.36" fill="#f8b858" opacity="0.66"/>
<circle cx="308.4" cy="175.6" r="0.70" fill="#eea040" opacity="0.58"/>
<circle cx="319.1" cy="157.6" r="0.69" fill="#eea040" opacity="0.90"/>
<circle cx="307.3" cy="159.3" r="0.34" fill="#f0a444" opacity="0.96"/>
<circle cx="313.1" cy="161.1" r="0.31" fill="#ffdc98" opacity="0.70"/>
<circle cx="305.3" cy="141.5" r="0.55" fill="#f8b858" opacity="0.73"/>
<circle cx="309.1" cy="167.5" r="0.30" fill="#ffdc98" opacity="0.62"/>
<circle cx="305.4" cy="139.9" r="0.56" fill="#eea040" opacity="0.92"/>
<circle cx="305.9" cy="132.7" r="0.61" fill="#f8b858" opacity="0.85"/>
<circle cx="302.9" cy="139.7" r="0.48" fill="#eea040" opacity="0.66"/>
<circle cx="302.6" cy="132.8" r="0.40" fill="#eea040" opacity="0.70"/>
<circle cx="304.0" cy="146.8" r="0.47" fill="#ffe8b8" opacity="0.73"/>
<circle cx="318.8" cy="143.1" r="0.56" fill="#eea040" opacity="0.94"/>
<circle cx="309.2" cy="153.2" r="0.63" fill="#ffcf7a" opacity="0.95"/>
<circle cx="324.0" cy="154.8" r="0.36" fill="#f8b858" opacity="0.89"/>
<circle cx="304.7" cy="151.5" r="0.53" fill="#eea040" opacity="0.77"/>
<circle cx="308.0" cy="152.3" r="0.62" fill="#f0a444" opacity="0.68"/>
<circle cx="286.4" cy="164.3" r="0.38" fill="#ffdc98" opacity="0.84"/>
<circle cx="283.4" cy="150.1" r="0.59" fill="#eea040" opacity="0.81"/>
<circle cx="318.6" cy="154.6" r="0.46" fill="#ffdc98" opacity="0.51"/>
<circle cx="324.0" cy="145.2" r="0.57" fill="#ffcf7a" opacity="0.79"/>
<circle cx="313.0" cy="167.4" r="0.68" fill="#f8b858" opacity="0.76"/>
<circle cx="303.3" cy="153.3" r="0.67" fill="#eea040" opacity="0.53"/>
<circle cx="315.8" cy="164.8" r="0.59" fill="#f8b858" opacity="0.91"/>
<circle cx="300.1" cy="162.8" r="0.63" fill="#ffdc98" opacity="0.91"/>
<circle cx="298.2" cy="138.7" r="0.49" fill="#f8b858" opacity="0.89"/>
<circle cx="308.8" cy="161.2" r="0.40" fill="#f8b858" opacity="0.71"/>
<circle cx="289.3" cy="154.0" r="0.62" fill="#eea040" opacity="0.68"/>
<circle cx="305.8" cy="162.3" r="0.47" fill="#eea040" opacity="0.82"/>
<circle cx="315.3" cy="148.7" r="0.42" fill="#ffcf7a" opacity="0.69"/>
<circle cx="311.3" cy="146.9" r="0.63" fill="#ffcf7a" opacity="0.82"/>
<circle cx="305.7" cy="146.6" r="0.33" fill="#ffe8b8" opacity="0.65"/>
<circle cx="315.1" cy="155.1" r="0.39" fill="#f0a444" opacity="0.89"/>
<circle cx="311.7" cy="145.7" r="0.46" fill="#ffe8b8" opacity="0.77"/>
<circle cx="322.2" cy="143.8" r="0.61" fill="#ffe8b8" opacity="0.83"/>
<circle cx="315.7" cy="165.8" r="0.51" fill="#ffdc98" opacity="0.87"/>
<circle cx="307.3" cy="147.8" r="0.35" fill="#f8b858" opacity="0.71"/>
<circle cx="295.5" cy="154.0" r="0.49" fill="#eea040" opacity="0.95"/>
<circle cx="296.5" cy="152.6" r="0.52" fill="#ffcf7a" opacity="0.93"/>
<circle cx="315.4" cy="159.1" r="0.58" fill="#f0a444" opacity="0.75"/>
<circle cx="316.0" cy="144.2" r="0.47" fill="#ffcf7a" opacity="0.98"/>
<circle cx="314.6" cy="160.1" r="0.56" fill="#ffcf7a" opacity="0.51"/>
<circle cx="299.1" cy="131.9" r="0.43" fill="#ffe8b8" opacity="0.99"/>
<circle cx="290.7" cy="153.6" r="0.36" fill="#ffdc98" opacity="0.61"/>
<circle cx="302.6" cy="145.9" r="0.64" fill="#ffdc98" opacity="0.68"/>
<circle cx="312.6" cy="140.1" r="0.66" fill="#f0a444" opacity="0.64"/>
<circle cx="297.1" cy="157.7" r="0.63" fill="#ffdc98" opacity="0.65"/>
<circle cx="298.8" cy="158.4" r="0.41" fill="#f8b858" opacity="0.75"/>
<circle cx="298.5" cy="138.1" r="0.43" fill="#f0a444" opacity="0.66"/>
<circle cx="298.2" cy="159.2" r="0.46" fill="#ffdc98" opacity="0.79"/>
<circle cx="309.6" cy="153.0" r="0.38" fill="#ffe8b8" opacity="0.96"/>
<circle cx="310.4" cy="148.7" r="0.50" fill="#ffdc98" opacity="0.77"/>
<circle cx="298.0" cy="143.1" r="0.58" fill="#eea040" opacity="0.80"/>
<circle cx="312.8" cy="153.3" r="0.55" fill="#f8b858" opacity="0.81"/>
<circle cx="315.8" cy="155.6" r="0.31" fill="#eea040" opacity="0.89"/>
<circle cx="316.4" cy="158.3" r="0.58" fill="#f8b858" opacity="0.93"/>
<circle cx="301.1" cy="155.9" r="0.47" fill="#ffcf7a" opacity="0.82"/>
<circle cx="296.0" cy="152.2" r="0.63" fill="#ffdc98" opacity="0.89"/>
<circle cx="287.1" cy="142.3" r="0.48" fill="#ffdc98" opacity="0.51"/>
<circle cx="279.8" cy="135.3" r="0.56" fill="#ffdc98" opacity="0.58"/>
<circle cx="305.4" cy="150.8" r="0.49" fill="#eea040" opacity="0.95"/>
<circle cx="311.1" cy="152.1" r="0.57" fill="#ffcf7a" opacity="0.56"/>
<circle cx="311.2" cy="156.7" r="0.49" fill="#ffe8b8" opacity="0.64"/>
<circle cx="310.9" cy="167.4" r="0.37" fill="#eea040" opacity="0.53"/>
<circle cx="304.9" cy="133.8" r="0.59" fill="#eea040" opacity="0.54"/>
<circle cx="297.4" cy="148.1" r="0.57" fill="#ffcf7a" opacity="0.95"/>
<circle cx="309.6" cy="150.6" r="0.31" fill="#ffe8b8" opacity="0.83"/>
<circle cx="318.7" cy="155.9" r="0.59" fill="#ffdc98" opacity="0.58"/>
<circle cx="302.2" cy="146.8" r="0.68" fill="#ffdc98" opacity="0.86"/>
<circle cx="307.1" cy="147.2" r="0.62" fill="#eea040" opacity="0.68"/>
<circle cx="290.3" cy="154.4" r="0.48" fill="#ffe8b8" opacity="0.64"/>
<circle cx="305.3" cy="158.7" r="0.55" fill="#ffe8b8" opacity="0.83"/>
<circle cx="302.3" cy="163.3" r="0.69" fill="#ffe8b8" opacity="0.92"/>
<circle cx="317.6" cy="141.1" r="0.69" fill="#ffdc98" opacity="0.62"/>
<circle cx="303.8" cy="140.2" r="0.66" fill="#f0a444" opacity="0.90"/>
<circle cx="306.2" cy="144.2" r="0.41" fill="#ffcf7a" opacity="0.58"/>
<circle cx="308.5" cy="157.1" r="0.66" fill="#f8b858" opacity="1.00"/>
<circle cx="306.6" cy="170.3" r="0.62" fill="#ffdc98" opacity="0.84"/>
<circle cx="307.2" cy="155.3" r="0.52" fill="#f8b858" opacity="0.90"/>
<circle cx="314.3" cy="137.2" r="0.69" fill="#ffcf7a" opacity="0.65"/>
<circle cx="304.4" cy="142.4" r="0.38" fill="#ffcf7a" opacity="0.63"/>
<circle cx="313.3" cy="141.8" r="0.34" fill="#ffcf7a" opacity="0.90"/>
<circle cx="311.6" cy="164.4" r="0.66" fill="#ffe8b8" opacity="0.94"/>
<circle cx="304.7" cy="160.5" r="0.48" fill="#ffcf7a" opacity="0.84"/>
<circle cx="312.3" cy="162.9" r="0.54" fill="#ffdc98" opacity="0.91"/>
<circle cx="310.4" cy="139.4" r="0.49" fill="#ffdc98" opacity="0.98"/>
<circle cx="305.8" cy="155.4" r="0.64" fill="#f8b858" opacity="0.96"/>
<circle cx="307.4" cy="154.6" r="0.51" fill="#ffcf7a" opacity="0.92"/>
<circle cx="313.0" cy="147.0" r="0.62" fill="#f0a444" opacity="0.85"/>
<circle cx="293.9" cy="160.6" r="0.69" fill="#f8b858" opacity="0.96"/>
<circle cx="308.0" cy="154.9" r="0.48" fill="#ffcf7a" opacity="0.84"/>
<circle cx="309.7" cy="153.3" r="0.54" fill="#ffdc98" opacity="0.94"/>
<circle cx="321.5" cy="148.0" r="0.42" fill="#ffdc98" opacity="0.92"/>
<circle cx="317.0" cy="147.9" r="0.43" fill="#f8b858" opacity="0.86"/>
<circle cx="297.7" cy="139.5" r="0.65" fill="#ffdc98" opacity="0.88"/>
<circle cx="311.7" cy="147.5" r="0.49" fill="#f8b858" opacity="0.94"/>
<circle cx="312.9" cy="154.3" r="0.53" fill="#ffcf7a" opacity="0.98"/>
<circle cx="309.1" cy="151.1" r="0.70" fill="#eea040" opacity="0.94"/>
<circle cx="308.5" cy="145.0" r="0.44" fill="#ffcf7a" opacity="0.86"/>
<circle cx="317.1" cy="149.1" r="0.51" fill="#eea040" opacity="0.92"/>
<circle cx="312.5" cy="156.8" r="0.50" fill="#ffdc98" opacity="0.82"/>
<circle cx="302.9" cy="158.2" r="0.71" fill="#ffcf7a" opacity="0.98"/>
<circle cx="293.9" cy="156.1" r="0.70" fill="#f8b858" opacity="0.83"/>
<circle cx="316.0" cy="157.6" r="0.54" fill="#ffdc98" opacity="0.95"/>
<circle cx="322.3" cy="148.8" r="0.55" fill="#ffcf7a" opacity="0.80"/>
<circle cx="302.3" cy="154.9" r="0.71" fill="#eea040" opacity="0.90"/>
<circle cx="304.1" cy="157.7" r="0.68" fill="#ffdc98" opacity="0.84"/>
<circle cx="304.6" cy="151.7" r="0.73" fill="#ffdc98" opacity="0.85"/>
<circle cx="308.0" cy="154.6" r="0.62" fill="#f8b858" opacity="0.86"/>
<circle cx="307.8" cy="156.4" r="0.57" fill="#f8b858" opacity="0.90"/>
<circle cx="310.2" cy="152.7" r="0.74" fill="#f8b858" opacity="0.93"/>
<circle cx="296.5" cy="148.1" r="0.45" fill="#f0a444" opacity="0.95"/>
<circle cx="303.4" cy="155.3" r="0.49" fill="#ffdc98" opacity="0.85"/>
<circle cx="304.6" cy="167.4" r="0.42" fill="#f0a444" opacity="0.95"/>
<circle cx="313.7" cy="160.9" r="0.57" fill="#ffe8b8" opacity="0.90"/>
<circle cx="308.3" cy="153.3" r="0.72" fill="#f8b858" opacity="0.91"/>
<circle cx="306.8" cy="154.6" r="0.56" fill="#f8b858" opacity="0.86"/>
<circle cx="310.6" cy="156.4" r="0.69" fill="#f8b858" opacity="0.94"/>
<circle cx="298.1" cy="145.2" r="0.74" fill="#f0a444" opacity="0.95"/>
<circle cx="309.6" cy="156.4" r="0.65" fill="#f8b858" opacity="0.93"/>
<circle cx="304.2" cy="150.7" r="0.42" fill="#ffdc98" opacity="0.95"/>
<circle cx="315.8" cy="139.9" r="0.60" fill="#f0a444" opacity="0.87"/>
<circle cx="315.1" cy="141.3" r="0.59" fill="#ffdc98" opacity="0.80"/>
<circle cx="314.4" cy="160.7" r="0.49" fill="#f0a444" opacity="0.91"/>
<circle cx="317.9" cy="155.5" r="0.62" fill="#f0a444" opacity="0.97"/>
<circle cx="301.0" cy="152.1" r="0.60" fill="#eea040" opacity="0.82"/>
<circle cx="308.4" cy="166.2" r="0.75" fill="#ffdc98" opacity="0.96"/>
<circle cx="295.7" cy="146.1" r="0.51" fill="#eea040" opacity="0.82"/>
<circle cx="269.4" cy="117.4" r="0.46" fill="#ffcf7a" opacity="0.46"/>
<circle cx="264.3" cy="121.8" r="0.38" fill="#ffcf7a" opacity="0.82"/>
<circle cx="260.9" cy="122.6" r="0.38" fill="#eea040" opacity="0.83"/>
<circle cx="271.1" cy="116.1" r="0.33" fill="#eea040" opacity="0.84"/>
<circle cx="262.6" cy="123.4" r="0.48" fill="#ffcf7a" opacity="0.79"/>
<circle cx="260.6" cy="122.9" r="0.48" fill="#f8b858" opacity="0.84"/>
<circle cx="274.5" cy="115.7" r="0.58" fill="#eea040" opacity="0.46"/>
<circle cx="265.8" cy="120.4" r="0.46" fill="#ffcf7a" opacity="0.63"/>
<circle cx="278.3" cy="114.9" r="0.40" fill="#ffe8b8" opacity="0.65"/>
<circle cx="282.2" cy="112.0" r="0.55" fill="#ffe8b8" opacity="0.47"/>
<circle cx="261.3" cy="120.7" r="0.56" fill="#ffcf7a" opacity="0.75"/>
<circle cx="267.2" cy="119.1" r="0.43" fill="#ffcf7a" opacity="0.68"/>
<circle cx="262.7" cy="121.8" r="0.60" fill="#ffcf7a" opacity="0.65"/>
<circle cx="282.3" cy="111.3" r="0.31" fill="#f0a444" opacity="0.74"/>
<circle cx="281.2" cy="110.5" r="0.54" fill="#ffcf7a" opacity="0.47"/>
<circle cx="263.1" cy="120.5" r="0.59" fill="#f0a444" opacity="0.58"/>
<circle cx="267.7" cy="120.0" r="0.59" fill="#f0a444" opacity="0.86"/>
<circle cx="257.2" cy="120.9" r="0.43" fill="#f0a444" opacity="0.68"/>
<circle cx="281.6" cy="111.5" r="0.52" fill="#f0a444" opacity="0.78"/>
<circle cx="279.1" cy="111.8" r="0.50" fill="#eea040" opacity="0.54"/>
<circle cx="269.0" cy="118.4" r="0.44" fill="#ffcf7a" opacity="0.82"/>
<circle cx="264.9" cy="122.7" r="0.41" fill="#ffcf7a" opacity="0.71"/>
<circle cx="285.0" cy="115.3" r="0.40" fill="#f0a444" opacity="0.60"/>
<circle cx="267.0" cy="120.2" r="0.53" fill="#ffcf7a" opacity="0.52"/>
<circle cx="273.0" cy="118.0" r="0.46" fill="#f0a444" opacity="0.83"/>
<circle cx="278.7" cy="115.2" r="0.59" fill="#f8b858" opacity="0.78"/>
<circle cx="283.8" cy="118.8" r="0.36" fill="#f0a444" opacity="0.67"/>
<circle cx="288.9" cy="141.9" r="0.46" fill="#eea040" opacity="0.73"/>
<circle cx="294.3" cy="123.1" r="0.49" fill="#eea040" opacity="0.68"/>
<circle cx="283.1" cy="118.3" r="0.56" fill="#ffe8b8" opacity="0.40"/>
<circle cx="284.5" cy="146.7" r="0.47" fill="#f0a444" opacity="0.59"/>
<circle cx="285.5" cy="143.7" r="0.48" fill="#ffdc98" opacity="0.57"/>
<circle cx="286.3" cy="126.0" r="0.41" fill="#ffe8b8" opacity="0.64"/>
<circle cx="285.1" cy="127.1" r="0.40" fill="#ffdc98" opacity="0.75"/>
<circle cx="285.5" cy="132.3" r="0.54" fill="#ffdc98" opacity="0.60"/>
<circle cx="288.4" cy="133.8" r="0.33" fill="#f0a444" opacity="0.81"/>
<circle cx="290.4" cy="122.3" r="0.40" fill="#ffcf7a" opacity="0.84"/>
<circle cx="286.3" cy="114.9" r="0.38" fill="#f0a444" opacity="0.80"/>
<circle cx="290.8" cy="132.3" r="0.60" fill="#ffe8b8" opacity="0.63"/>
<circle cx="284.9" cy="138.7" r="0.43" fill="#ffcf7a" opacity="0.61"/>
<circle cx="285.1" cy="146.2" r="0.50" fill="#ffcf7a" opacity="0.64"/>
<circle cx="285.7" cy="127.9" r="0.45" fill="#ffe8b8" opacity="0.69"/>
<circle cx="287.9" cy="128.3" r="0.42" fill="#ffe8b8" opacity="0.75"/>
<circle cx="288.3" cy="125.7" r="0.46" fill="#f8b858" opacity="0.77"/>
<circle cx="285.4" cy="116.6" r="0.39" fill="#eea040" opacity="0.48"/>
<circle cx="288.8" cy="144.4" r="0.51" fill="#ffe8b8" opacity="0.77"/>
<circle cx="289.0" cy="119.3" r="0.39" fill="#ffe8b8" opacity="0.63"/>
<circle cx="285.3" cy="144.4" r="0.42" fill="#ffe8b8" opacity="0.43"/>
<circle cx="285.1" cy="147.8" r="0.49" fill="#ffdc98" opacity="0.42"/>
<circle cx="285.6" cy="114.4" r="0.30" fill="#ffe8b8" opacity="0.72"/>
<circle cx="289.1" cy="142.6" r="0.48" fill="#f8b858" opacity="0.70"/>
<circle cx="287.1" cy="120.0" r="0.53" fill="#eea040" opacity="0.66"/>
<circle cx="248.7" cy="141.7" r="0.37" fill="#f8b858" opacity="0.77"/>
<circle cx="246.5" cy="142.0" r="0.57" fill="#ffcf7a" opacity="0.55"/>
<circle cx="250.3" cy="148.3" r="0.46" fill="#ffcf7a" opacity="0.69"/>
<circle cx="249.0" cy="151.4" r="0.54" fill="#f8b858" opacity="0.76"/>
<circle cx="247.2" cy="142.2" r="0.39" fill="#ffe8b8" opacity="0.54"/>
<circle cx="246.3" cy="140.2" r="0.37" fill="#ffcf7a" opacity="0.78"/>
<circle cx="250.1" cy="150.1" r="0.64" fill="#ffe8b8" opacity="0.70"/>
<circle cx="248.4" cy="143.5" r="0.38" fill="#ffe8b8" opacity="0.57"/>
<circle cx="248.2" cy="156.1" r="0.59" fill="#ffe8b8" opacity="0.64"/>
<circle cx="246.6" cy="143.8" r="0.61" fill="#ffcf7a" opacity="0.94"/>
<circle cx="247.6" cy="152.7" r="0.38" fill="#eea040" opacity="0.64"/>
<circle cx="248.8" cy="148.2" r="0.58" fill="#f8b858" opacity="0.61"/>
<circle cx="248.1" cy="139.1" r="0.61" fill="#f0a444" opacity="0.68"/>
<circle cx="248.6" cy="141.2" r="0.49" fill="#ffdc98" opacity="0.67"/>
<circle cx="245.6" cy="147.0" r="0.62" fill="#ffdc98" opacity="0.75"/>
<circle cx="244.8" cy="142.6" r="0.40" fill="#ffcf7a" opacity="0.61"/>
<circle cx="278.9" cy="165.8" r="0.58" fill="#f8b858" opacity="0.61"/>
<circle cx="281.3" cy="166.5" r="0.59" fill="#ffdc98" opacity="0.56"/>
<circle cx="272.9" cy="166.3" r="0.38" fill="#f8b858" opacity="0.67"/>
<circle cx="278.4" cy="161.6" r="0.64" fill="#ffdc98" opacity="0.59"/>
<circle cx="276.5" cy="164.9" r="0.46" fill="#eea040" opacity="0.56"/>
<circle cx="283.7" cy="164.9" r="0.45" fill="#ffe8b8" opacity="0.95"/>
<circle cx="279.1" cy="169.8" r="0.37" fill="#ffcf7a" opacity="0.89"/>
<circle cx="278.3" cy="163.6" r="0.60" fill="#ffdc98" opacity="0.83"/>
<circle cx="284.5" cy="166.0" r="0.35" fill="#eea040" opacity="0.51"/>
<circle cx="280.9" cy="166.1" r="0.60" fill="#eea040" opacity="0.64"/>
<circle cx="280.0" cy="164.2" r="0.62" fill="#f0a444" opacity="0.86"/>
<circle cx="281.0" cy="170.2" r="0.33" fill="#eea040" opacity="0.63"/>
<circle cx="276.4" cy="166.9" r="0.60" fill="#eea040" opacity="0.71"/>
<circle cx="284.2" cy="160.3" r="0.35" fill="#ffcf7a" opacity="0.62"/>
<circle cx="274.8" cy="169.7" r="0.54" fill="#ffcf7a" opacity="0.90"/>
<circle cx="276.1" cy="160.4" r="0.39" fill="#f0a444" opacity="0.88"/>
<circle cx="310.4" cy="179.1" r="0.38" fill="#f8b858" opacity="0.74"/>
<circle cx="309.8" cy="177.1" r="0.31" fill="#f8b858" opacity="0.52"/>
<circle cx="308.9" cy="174.3" r="0.52" fill="#eea040" opacity="0.72"/>
<circle cx="308.8" cy="176.4" r="0.35" fill="#ffe8b8" opacity="0.84"/>
<circle cx="307.2" cy="175.0" r="0.50" fill="#ffcf7a" opacity="0.73"/>
<circle cx="308.0" cy="171.1" r="0.53" fill="#ffcf7a" opacity="0.76"/>
<circle cx="308.7" cy="178.8" r="0.59" fill="#ffcf7a" opacity="0.77"/>
<circle cx="309.0" cy="177.9" r="0.36" fill="#eea040" opacity="0.87"/>
<circle cx="308.7" cy="179.1" r="0.60" fill="#f8b858" opacity="0.75"/>
<circle cx="271.9" cy="188.8" r="0.63" fill="#f0a444" opacity="0.59"/>
<circle cx="269.6" cy="187.5" r="0.59" fill="#ffdc98" opacity="0.68"/>
<circle cx="257.8" cy="185.1" r="0.37" fill="#f8b858" opacity="0.70"/>
<circle cx="266.5" cy="187.3" r="0.63" fill="#ffe8b8" opacity="0.77"/>
<circle cx="267.3" cy="188.8" r="0.64" fill="#ffe8b8" opacity="0.69"/>
<circle cx="274.5" cy="188.6" r="0.36" fill="#ffcf7a" opacity="0.56"/>
<circle cx="282.4" cy="189.7" r="0.35" fill="#eea040" opacity="0.72"/>
<circle cx="271.9" cy="185.0" r="0.30" fill="#f8b858" opacity="0.71"/>
<circle cx="268.0" cy="191.2" r="0.40" fill="#f8b858" opacity="0.80"/>
<circle cx="264.8" cy="187.4" r="0.52" fill="#ffdc98" opacity="0.45"/>
<circle cx="264.7" cy="189.1" r="0.53" fill="#ffdc98" opacity="0.67"/>
<circle cx="263.4" cy="190.4" r="0.37" fill="#ffcf7a" opacity="0.71"/>
<circle cx="261.8" cy="187.9" r="0.32" fill="#f8b858" opacity="0.53"/>
<circle cx="270.1" cy="190.7" r="0.64" fill="#ffdc98" opacity="0.47"/>
<circle cx="270.3" cy="186.6" r="0.36" fill="#ffcf7a" opacity="0.43"/>
<circle cx="268.1" cy="181.9" r="0.47" fill="#f0a444" opacity="0.74"/>
<circle cx="270.3" cy="192.3" r="0.34" fill="#ffdc98" opacity="0.62"/>
<circle cx="266.0" cy="184.5" r="0.41" fill="#ffcf7a" opacity="0.56"/>
<circle cx="267.8" cy="186.8" r="0.63" fill="#f0a444" opacity="0.69"/>
<circle cx="260.4" cy="188.4" r="0.56" fill="#ffdc98" opacity="0.41"/>
<circle cx="283.3" cy="197.9" r="0.34" fill="#eea040" opacity="0.49"/>
<circle cx="281.5" cy="198.7" r="0.47" fill="#f0a444" opacity="0.52"/>
<circle cx="292.6" cy="194.9" r="0.37" fill="#f8b858" opacity="0.37"/>
<circle cx="290.0" cy="195.2" r="0.47" fill="#ffcf7a" opacity="0.37"/>
<circle cx="283.5" cy="199.8" r="0.48" fill="#ffdc98" opacity="0.60"/>
<circle cx="290.6" cy="201.0" r="0.40" fill="#f8b858" opacity="0.45"/>
<circle cx="319.2" cy="200.1" r="0.43" fill="#f8b858" opacity="0.34"/>
<circle cx="329.7" cy="197.7" r="0.49" fill="#ffcf7a" opacity="0.33"/>
<circle cx="337.4" cy="198.0" r="0.34" fill="#ffcf7a" opacity="0.41"/>
<circle cx="322.6" cy="199.2" r="0.46" fill="#f0a444" opacity="0.43"/>
<circle cx="316.8" cy="196.9" r="0.44" fill="#ffcf7a" opacity="0.57"/>
<circle cx="331.2" cy="191.9" r="0.47" fill="#f8b858" opacity="0.57"/>
<circle cx="334.5" cy="195.8" r="0.46" fill="#ffe8b8" opacity="0.50"/>
<circle cx="330.5" cy="196.4" r="0.36" fill="#ffe8b8" opacity="0.44"/>
<circle cx="327.2" cy="242.8" r="0.54" fill="#ffe8b8" opacity="0.68"/>
<circle cx="307.9" cy="242.1" r="0.48" fill="#eea040" opacity="0.43"/>
<circle cx="333.6" cy="228.3" r="0.54" fill="#eea040" opacity="0.49"/>
<circle cx="338.2" cy="240.1" r="0.43" fill="#f8b858" opacity="0.55"/>
<circle cx="341.7" cy="233.0" r="0.47" fill="#ffe8b8" opacity="0.36"/>
<circle cx="343.0" cy="224.6" r="0.40" fill="#ffe8b8" opacity="0.51"/>
<circle cx="334.3" cy="225.9" r="0.36" fill="#f8b858" opacity="0.69"/>
<circle cx="325.6" cy="227.7" r="0.52" fill="#ffcf7a" opacity="0.40"/>
<circle cx="320.1" cy="235.0" r="0.48" fill="#ffdc98" opacity="0.39"/>
<circle cx="339.9" cy="232.3" r="0.33" fill="#ffe8b8" opacity="0.51"/>
<circle cx="338.8" cy="218.5" r="0.47" fill="#f8b858" opacity="0.62"/>
<circle cx="311.6" cy="236.8" r="0.48" fill="#ffcf7a" opacity="0.60"/>
<circle cx="309.6" cy="218.5" r="0.43" fill="#eea040" opacity="0.48"/>
<circle cx="298.4" cy="227.7" r="0.54" fill="#ffcf7a" opacity="0.53"/>
<circle cx="327.0" cy="238.9" r="0.31" fill="#f0a444" opacity="0.39"/>
<circle cx="339.0" cy="241.5" r="0.54" fill="#ffcf7a" opacity="0.48"/>
<circle cx="327.2" cy="229.1" r="0.52" fill="#f8b858" opacity="0.55"/>
<circle cx="308.8" cy="216.6" r="0.52" fill="#eea040" opacity="0.37"/>
<circle cx="310.8" cy="237.9" r="0.48" fill="#f0a444" opacity="0.30"/>
<circle cx="302.3" cy="235.9" r="0.48" fill="#eea040" opacity="0.68"/>
<circle cx="305.7" cy="233.8" r="0.37" fill="#f0a444" opacity="0.41"/>
<circle cx="304.3" cy="255.8" r="0.49" fill="#f0a444" opacity="0.50"/>
<circle cx="302.8" cy="243.7" r="0.30" fill="#ffdc98" opacity="0.60"/>
<circle cx="307.0" cy="255.7" r="0.32" fill="#f8b858" opacity="0.54"/>
<circle cx="304.3" cy="268.9" r="0.47" fill="#f8b858" opacity="0.50"/>
<circle cx="308.7" cy="246.9" r="0.50" fill="#f0a444" opacity="0.53"/>
<circle cx="303.0" cy="255.7" r="0.37" fill="#ffe8b8" opacity="0.35"/>
<circle cx="303.9" cy="251.2" r="0.47" fill="#ffe8b8" opacity="0.32"/>
<circle cx="304.1" cy="260.9" r="0.38" fill="#f8b858" opacity="0.44"/>
<circle cx="370.0" cy="285.3" r="0.37" fill="#ffe8b8" opacity="0.78"/>
<circle cx="372.8" cy="293.6" r="0.36" fill="#ffe8b8" opacity="0.75"/>
<circle cx="384.3" cy="284.6" r="0.55" fill="#f0a444" opacity="0.68"/>
<circle cx="377.1" cy="281.9" r="0.41" fill="#ffe8b8" opacity="0.35"/>
<circle cx="377.3" cy="283.0" r="0.37" fill="#ffe8b8" opacity="0.74"/>
<circle cx="381.6" cy="291.8" r="0.50" fill="#f0a444" opacity="0.47"/>
<circle cx="382.3" cy="307.9" r="0.41" fill="#ffe8b8" opacity="0.61"/>
<circle cx="390.6" cy="309.0" r="0.31" fill="#ffcf7a" opacity="0.60"/>
<circle cx="374.3" cy="296.4" r="0.49" fill="#f0a444" opacity="0.64"/>
<circle cx="371.1" cy="291.2" r="0.37" fill="#f8b858" opacity="0.71"/>
<circle cx="367.3" cy="285.5" r="0.53" fill="#ffe8b8" opacity="0.68"/>
<circle cx="374.8" cy="291.2" r="0.56" fill="#f0a444" opacity="0.67"/>
<circle cx="376.2" cy="293.9" r="0.40" fill="#ffdc98" opacity="0.79"/>
<circle cx="383.7" cy="273.2" r="0.54" fill="#f8b858" opacity="0.80"/>
<circle cx="380.6" cy="288.6" r="0.56" fill="#ffdc98" opacity="0.55"/>
<circle cx="381.7" cy="278.4" r="0.58" fill="#f8b858" opacity="0.61"/>
<circle cx="389.4" cy="286.1" r="0.52" fill="#f0a444" opacity="0.60"/>
<circle cx="387.5" cy="292.1" r="0.58" fill="#f0a444" opacity="0.61"/>
<circle cx="383.3" cy="269.9" r="0.41" fill="#ffdc98" opacity="0.70"/>
<circle cx="369.5" cy="285.2" r="0.55" fill="#f8b858" opacity="0.49"/>
<circle cx="363.2" cy="287.1" r="0.31" fill="#f0a444" opacity="0.42"/>
<circle cx="387.1" cy="288.1" r="0.31" fill="#ffe8b8" opacity="0.55"/>
<circle cx="382.6" cy="286.3" r="0.33" fill="#ffcf7a" opacity="0.46"/>
<circle cx="390.2" cy="297.2" r="0.32" fill="#ffe8b8" opacity="0.71"/>
<circle cx="402.4" cy="256.5" r="0.35" fill="#ffcf7a" opacity="0.51"/>
<circle cx="403.9" cy="250.8" r="0.35" fill="#eea040" opacity="0.43"/>
<circle cx="399.5" cy="263.7" r="0.45" fill="#f8b858" opacity="0.62"/>
<circle cx="403.4" cy="262.8" r="0.31" fill="#f0a444" opacity="0.55"/>
<circle cx="403.7" cy="260.4" r="0.40" fill="#ffcf7a" opacity="0.68"/>
<circle cx="397.1" cy="262.3" r="0.46" fill="#ffdc98" opacity="0.43"/>
<circle cx="403.3" cy="251.9" r="0.38" fill="#f8b858" opacity="0.34"/>
<circle cx="400.9" cy="259.5" r="0.51" fill="#f0a444" opacity="0.44"/>
<circle cx="362.0" cy="307.6" r="0.45" fill="#eea040" opacity="0.52"/>
<circle cx="358.9" cy="317.2" r="0.36" fill="#eea040" opacity="0.55"/>
<circle cx="355.2" cy="311.0" r="0.46" fill="#ffe8b8" opacity="0.56"/>
<circle cx="356.2" cy="316.4" r="0.37" fill="#f0a444" opacity="0.51"/>
<circle cx="355.2" cy="312.4" r="0.42" fill="#f0a444" opacity="0.56"/>
<circle cx="356.5" cy="315.3" r="0.40" fill="#ffcf7a" opacity="0.69"/>
<circle cx="361.7" cy="310.6" r="0.44" fill="#f8b858" opacity="0.38"/>
<circle cx="354.2" cy="311.7" r="0.48" fill="#eea040" opacity="0.66"/>
</g>
<circle cx="325.3" cy="211.5" r="134.5" fill="url(#shade)"/>
<circle cx="325.3" cy="211.5" r="134.5" fill="url(#edge)"/>
<circle cx="325.3" cy="211.5" r="134.5" fill="url(#limb)"/>
<circle cx="325.3" cy="211.5" r="133.7" fill="none" stroke="url(#rim)" stroke-width="1.6"/>
</g>
</svg>
<!-- toolbar -->
<div class="a" style="left:2px;top:371px;width:646px;height:23px;background:#bbe3ec"></div>
<div class="a btn" style="left:5.4px;top:374.8px;width:55.8px;height:15.4px;background:#e2e2e2;border:1px solid #bdbdbd;box-sizing:border-box"></div>
<div class="a btn" style="left:63.5px;top:374.8px;width:64.2px;height:15.4px;background:#e2e2e2;border:1px solid #bdbdbd;box-sizing:border-box"></div>
<div class="a btn" style="left:129.6px;top:374.8px;width:83.6px;height:15.4px;background:#e2e2e2;border:1px solid #bdbdbd;box-sizing:border-box"></div>
<div class="a btn" style="left:215.4px;top:374.8px;width:79.8px;height:15.4px;background:#e2e2e2;border:1px solid #bdbdbd;box-sizing:border-box"></div>
<div class="a btn" style="left:576.4px;top:374.4px;width:68.4px;height:15.8px;background:#e3e3e3;border:1.6px solid #1a78d4;box-sizing:border-box"></div>
<!-- toolbar icons -->
<svg class="a" style="left:8.4px;top:377.4px" width="10" height="10" viewBox="0 0 10 10"><path d="M3.6 0.8h2.8v2.8h2.8v2.8h-2.8v2.8h-2.8v-2.8h-2.8v-2.8h2.8z" fill="#9cc0ea" stroke="#3a6cb4" stroke-width="0.9"/></svg>
<svg class="a" style="left:66.8px;top:379.6px" width="10" height="5" viewBox="0 0 10 5"><rect x="0.6" y="0.8" width="8.6" height="3" fill="#9cc0ea" stroke="#3a6cb4" stroke-width="0.9"/></svg>
<svg class="a" style="left:130.8px;top:375.6px" width="13" height="13" viewBox="0 0 13 13"><path d="M1.6 1v11.4" stroke="#2c6a1c" stroke-width="1.1"/><path d="M2.6 6.7l5-5.2v2.7h4.6v5h-4.6v2.7z" fill="#74cc44" stroke="#2f7a1e" stroke-width="0.9"/></svg>
<svg class="a" style="left:216.8px;top:375.6px" width="13" height="13" viewBox="0 0 13 13"><path d="M11.6 1v11.4" stroke="#2c6a1c" stroke-width="1.1"/><path d="M10.6 6.7l-5-5.2v2.7h-4.6v5h4.6v2.7z" fill="#74cc44" stroke="#2f7a1e" stroke-width="0.9"/></svg>
<svg class="a" style="left:579px;top:376.2px" width="12" height="12" viewBox="0 0 12 12"><rect x="0.6" y="2.2" width="10.2" height="9" fill="#f6f6f6" stroke="#8a8a8a" stroke-width="0.8"/><path d="M0.8 9.6h9.8" stroke="#c8c0b0" stroke-width="1"/><path d="M3.6 0.4h3.6v3h2.2l-4 4.2 -4-4.2h2.2z" transform="translate(0.6,0)" fill="#4a8ad8" stroke="#1f4f98" stroke-width="0.8"/></svg>
<!-- ruler -->
<div class="a" style="left:2px;top:393.8px;width:646px;height:9.8px;background:linear-gradient(#b6c2c6 0,#b0b0b0 1.2px,#a8a8a8 2.4px,#a8a8a8 7.6px,#b2b2b2 8.2px,#b2b2b2 9.8px)"></div>
<div class="a" style="left:5.2px;top:396.2px;width:640px;height:4.8px;background:repeating-linear-gradient(90deg,#808080 0,#808080 1px,rgba(0,0,0,0) 1px,rgba(0,0,0,0) 2.878px)"></div>
<!-- track -->
<div class="a" style="left:2px;top:403.6px;width:646px;height:32px;background:#808080"></div>
<div class="a" style="left:2px;top:435.4px;width:646px;height:1.6px;background:#c4c4c4"></div>
<!-- playhead -->
<div class="a" style="left:331.6px;top:394.6px;width:11.4px;height:8.4px;background:#cdcdcd"></div>
<div class="a" style="left:333.6px;top:394.6px;width:1.2px;height:8.4px;background:#f2f2f2"></div>
<div class="a" style="left:336.8px;top:394.6px;width:1.2px;height:8.4px;background:#f6f6f6"></div>
<div class="a" style="left:340px;top:394.6px;width:1.2px;height:8.4px;background:#f2f2f2"></div>
<div class="a" style="left:284.6px;top:418.6px;width:81.8px;height:13px;background:#3c3c3c"></div>
<div class="a" style="left:336.7px;top:402.8px;width:1.3px;height:34.2px;background:#3a0c1c"></div>
<div class="a" style="left:338px;top:402.8px;width:1.5px;height:34.2px;background:#ea5c88"></div>
<!-- dialog -->
<div class="a" style="left:375.2px;top:55.9px;width:272.6px;height:133px;background:#fff"></div>
<svg class="a" style="left:381.6px;top:61.8px" width="12" height="10" viewBox="0 0 12 10">
<ellipse cx="4.4" cy="4.6" rx="4" ry="3.9" fill="#b08e84"/><ellipse cx="3.4" cy="3.4" rx="2" ry="1.6" fill="#d9bcb4"/><path d="M2 7 L5.6 2.6" stroke="#a8483a" stroke-width="1.1"/><ellipse cx="7" cy="4.4" rx="2.5" ry="2.9" fill="#b9b0c2"/><ellipse cx="6.4" cy="5.2" rx="1.2" ry="1.3" fill="#e9e6ee"/>
<path d="M5.8 8 L10.4 8.4" stroke="#222" stroke-width="1.3"/><path d="M9 6.4 L10.4 8.3" stroke="#333" stroke-width="1"/>
</svg>
<svg class="a" style="left:633px;top:62.5px" width="8.5" height="8" viewBox="0 0 8.5 8"><path d="M0.5 0.5L8 7.5M8 0.5L0.5 7.5" stroke="#111" stroke-width="1" fill="none"/></svg>
<div class="a" style="left:387.7px;top:105.4px;width:9.2px;height:9.2px;border:1px solid #333;background:#fff;box-sizing:border-box"></div>
<div class="a" style="left:387.2px;top:136px;width:86.8px;height:14.8px;border:1px solid #1f7ad6;background:#cfe5f8;box-sizing:border-box"></div>
<svg class="a" style="left:464px;top:141.6px" width="8" height="5" viewBox="0 0 8 5"><path d="M0.6 0.6L4 4L7.4 0.6" stroke="#444" stroke-width="0.9" fill="none"/></svg>
<div class="a" style="left:387.2px;top:150.6px;width:87.2px;height:30.2px;border:1px solid #2a7fd4;background:#fff;box-sizing:border-box;box-shadow:1.6px 1.6px 1.6px rgba(0,0,0,0.55)"></div>
<div class="a" style="left:388.2px;top:151.4px;width:85.2px;height:9.2px;background:#0a78d6"></div>
<div class="a" style="left:586px;top:165px;width:52.6px;height:14.9px;border:1px solid #adadad;background:#e1e1e1;box-sizing:border-box"></div>
<span class="t" id="t0" style="left:32.62px;top:2.94px;line-height:13.0px;font-size:10px;color:#787878;font-weight:normal;font-family:'Liberation Sans', sans-serif;transform:scaleX(0.8539);">Software Update</span>
<span class="t" id="t1" style="left:22.33px;top:20.23px;line-height:11.05px;font-size:8.5px;color:#828282;font-weight:normal;font-family:'Liberation Sans', sans-serif;transform:scaleX(1.0038);">SharpCut -</span>
<span class="t" id="t2" style="left:66.92px;top:20.23px;line-height:11.05px;font-size:8.5px;color:#828282;font-weight:normal;font-family:'Liberation Sans', sans-serif;transform:scaleX(0.9728);">C:\Users\</span>
<span class="t" id="t3" style="left:101.83px;top:20.23px;line-height:11.05px;font-size:8.5px;color:#828282;font-weight:normal;font-family:'Liberation Sans', sans-serif;transform:scaleX(1.0218);">Jon\Downloads\</span>
<span class="t" id="t4" style="left:163.47px;top:20.23px;line-height:11.05px;font-size:8.5px;color:#828282;font-weight:normal;font-family:'Liberation Sans', sans-serif;transform:scaleX(0.9618);">MajorGeeks</span>
<span class="t" id="t5" style="left:210.41px;top:20.23px;line-height:11.05px;font-size:8.5px;color:#828282;font-weight:normal;font-family:'Liberation Sans', sans-serif;transform:scaleX(0.9496);">Test_WEBM_640_1_4MB.webm</span>
<span class="t" id="t6" style="left:12.41px;top:39.93px;line-height:11.18px;font-size:8.6px;color:#000;font-weight:normal;font-family:'Liberation Sans', sans-serif;transform:scaleX(1.0244);-webkit-text-stroke:0.12px #000;">File</span>
<span class="t" id="t7" style="left:39.35px;top:39.93px;line-height:11.18px;font-size:8.6px;color:#000;font-weight:normal;font-family:'Liberation Sans', sans-serif;transform:scaleX(1.0023);-webkit-text-stroke:0.12px #000;">Edit</span>
<span class="t" id="t8" style="left:68.16px;top:39.93px;line-height:11.18px;font-size:8.6px;color:#000;font-weight:normal;font-family:'Liberation Sans', sans-serif;transform:scaleX(0.9726);-webkit-text-stroke:0.12px #000;">Tools</span>
<span class="t" id="t9" style="left:100.65px;top:39.93px;line-height:11.18px;font-size:8.6px;color:#000;font-weight:normal;font-family:'Liberation Sans', sans-serif;transform:scaleX(1.0268);-webkit-text-stroke:0.12px #000;">Plugins</span>
<span class="t" id="t10" style="left:141.31px;top:39.93px;line-height:11.18px;font-size:8.6px;color:#000;font-weight:normal;font-family:'Liberation Sans', sans-serif;transform:scaleX(1.0806);-webkit-text-stroke:0.12px #000;">Help</span>
<span class="t" id="t11" style="left:396.11px;top:62.13px;line-height:11.18px;font-size:8.6px;color:#000;font-weight:normal;font-family:'Liberation Sans', sans-serif;transform:scaleX(0.9915);-webkit-text-stroke:0.15px #000;">Export media</span>
<span class="t" id="t12" style="left:386.95px;top:87.04px;line-height:15.6px;font-size:12px;color:#000;font-weight:bold;font-family:'Liberation Sans', sans-serif;transform:scaleX(1.1266);">Export settings</span>
<span class="t" id="t13" style="left:400.32px;top:104.83px;line-height:11.05px;font-size:8.5px;color:#000;font-weight:normal;font-family:'Liberation Sans', sans-serif;transform:scaleX(0.9824);-webkit-text-stroke:0.15px #000;">Merge all</span>
<span class="t" id="t14" style="left:438.35px;top:104.83px;line-height:11.05px;font-size:8.5px;color:#000;font-weight:normal;font-family:'Liberation Sans', sans-serif;transform:scaleX(0.9909);-webkit-text-stroke:0.15px #000;">exported files</span>
<span class="t" id="t15" style="left:490.92px;top:104.83px;line-height:11.05px;font-size:8.5px;color:#000;font-weight:normal;font-family:'Liberation Sans', sans-serif;transform:scaleX(0.9755);-webkit-text-stroke:0.15px #000;">into a single</span>
<span class="t" id="t16" style="left:537.66px;top:104.83px;line-height:11.05px;font-size:8.5px;color:#000;font-weight:normal;font-family:'Liberation Sans', sans-serif;transform:scaleX(1.0325);-webkit-text-stroke:0.15px #000;">video file</span>
<span class="t" id="t17" style="left:387.12px;top:124.63px;line-height:11.05px;font-size:8.5px;color:#000;font-weight:normal;font-family:'Liberation Sans', sans-serif;transform:scaleX(0.9869);-webkit-text-stroke:0.15px #000;">Target container</span>
<span class="t" id="t18" style="left:390.07px;top:139.43px;line-height:11.05px;font-size:8.5px;color:#000;font-weight:normal;font-family:'Liberation Sans', sans-serif;transform:scaleX(1.0441);-webkit-text-stroke:0.15px #000;">Original</span>
<span class="t" id="t19" style="left:389.42px;top:150.93px;line-height:11.05px;font-size:8.5px;color:#fff;font-weight:normal;font-family:'Liberation Sans', sans-serif;transform:scaleX(1.0593);-webkit-text-stroke:0.1px #fff;">Original</span>
<span class="t" id="t20" style="left:389.37px;top:160.73px;line-height:11.05px;font-size:8.5px;color:#000;font-weight:normal;font-family:'Liberation Sans', sans-serif;transform:scaleX(0.8850);-webkit-text-stroke:0.15px #000;">MPEG4 (.mp4)</span>
<span class="t" id="t21" style="left:389.69px;top:171.13px;line-height:11.05px;font-size:8.5px;color:#000;font-weight:normal;font-family:'Liberation Sans', sans-serif;transform:scaleX(0.9484);-webkit-text-stroke:0.15px #000;">Matroska (.mkv)</span>
<span class="t" id="t22" style="left:599.72px;top:168.23px;line-height:11.18px;font-size:8.6px;color:#000;font-weight:normal;font-family:'Liberation Sans', sans-serif;transform:scaleX(0.9972);-webkit-text-stroke:0.15px #000;">Export</span>
<span class="t" id="t23" style="left:20.39px;top:376.63px;line-height:11.18px;font-size:8.6px;color:#000;font-weight:normal;font-family:'Liberation Sans', sans-serif;transform:scaleX(0.9805);-webkit-text-stroke:0.35px #000;">Insert cut</span>
<span class="t" id="t24" style="left:79.03px;top:376.63px;line-height:11.18px;font-size:8.6px;color:#000;font-weight:normal;font-family:'Liberation Sans', sans-serif;transform:scaleX(0.9445);-webkit-text-stroke:0.35px #000;">Remove cut</span>
<span class="t" id="t25" style="left:144.94px;top:376.63px;line-height:11.18px;font-size:8.6px;color:#000;font-weight:normal;font-family:'Liberation Sans', sans-serif;transform:scaleX(0.9655);-webkit-text-stroke:0.35px #000;">Set cut start time</span>
<span class="t" id="t26" style="left:230.75px;top:376.63px;line-height:11.18px;font-size:8.6px;color:#000;font-weight:normal;font-family:'Liberation Sans', sans-serif;transform:scaleX(0.9702);-webkit-text-stroke:0.35px #000;">Set cut end time</span>
<span class="t" id="t27" style="left:298.73px;top:378.38px;line-height:11.05px;font-size:8.5px;color:#000;font-weight:normal;font-family:'Liberation Sans', sans-serif;transform:scaleX(0.9147);-webkit-text-stroke:0.15px #000;">00:00:15:815</span>
<span class="t" id="t28" style="left:347.35px;top:378.38px;line-height:11.05px;font-size:8.5px;color:#000;font-weight:normal;font-family:'Liberation Sans', sans-serif;transform:scaleX(0.9667);-webkit-text-stroke:0.15px #000;">- --:--:--:---</span>
<span class="t" id="t29" style="left:385.19px;top:378.38px;line-height:11.05px;font-size:8.5px;color:#000;font-weight:normal;font-family:'Liberation Sans', sans-serif;transform:scaleX(1.0003);-webkit-text-stroke:0.15px #000;">(Duration:</span>
<span class="t" id="t30" style="left:425.85px;top:378.38px;line-height:11.05px;font-size:8.5px;color:#000;font-weight:normal;font-family:'Liberation Sans', sans-serif;transform:scaleX(0.9541);-webkit-text-stroke:0.15px #000;">--:--:--:---)</span>
<span class="t" id="t31" style="left:591.62px;top:376.83px;line-height:11.18px;font-size:8.6px;color:#000;font-weight:normal;font-family:'Liberation Sans', sans-serif;transform:scaleX(0.9728);-webkit-text-stroke:0.35px #000;">Export media</span>
<span class="t" id="t32" style="left:285.59px;top:418.42px;line-height:14.3px;font-size:11px;color:#f0f0f0;font-weight:normal;font-family:'Liberation Mono', monospace;transform:scaleX(1.0039);">00:00:15:815</span>
<span class="t" id="t33" style="left:37.11px;top:396.42px;line-height:6.76px;font-size:5.2px;color:#fff;font-weight:bold;font-family:'Liberation Sans', sans-serif;transform:scaleX(0.9471);background:#a8a8a8;box-shadow:-1.5px 0 0 #a8a8a8,1.5px 0 0 #a8a8a8;text-shadow:0.5px 0.5px 0.8px #333,0 0 1px #666;-webkit-text-stroke:0.15px #fff;">00:00:02:449</span>
<span class="t" id="t34" style="left:89.03px;top:396.42px;line-height:6.76px;font-size:5.2px;color:#fff;font-weight:bold;font-family:'Liberation Sans', sans-serif;transform:scaleX(0.9389);background:#a8a8a8;box-shadow:-1.5px 0 0 #a8a8a8,1.5px 0 0 #a8a8a8;text-shadow:0.5px 0.5px 0.8px #333,0 0 1px #666;-webkit-text-stroke:0.15px #fff;">00:00:04:898</span>
<span class="t" id="t35" style="left:140.77px;top:396.42px;line-height:6.76px;font-size:5.2px;color:#fff;font-weight:bold;font-family:'Liberation Sans', sans-serif;transform:scaleX(0.9471);background:#a8a8a8;box-shadow:-1.5px 0 0 #a8a8a8,1.5px 0 0 #a8a8a8;text-shadow:0.5px 0.5px 0.8px #333,0 0 1px #666;-webkit-text-stroke:0.15px #fff;">00:00:07:347</span>
<span class="t" id="t36" style="left:192.52px;top:396.42px;line-height:6.76px;font-size:5.2px;color:#fff;font-weight:bold;font-family:'Liberation Sans', sans-serif;transform:scaleX(0.9471);background:#a8a8a8;box-shadow:-1.5px 0 0 #a8a8a8,1.5px 0 0 #a8a8a8;text-shadow:0.5px 0.5px 0.8px #333,0 0 1px #666;-webkit-text-stroke:0.15px #fff;">00:00:09:796</span>
<span class="t" id="t37" style="left:244.44px;top:396.42px;line-height:6.76px;font-size:5.2px;color:#fff;font-weight:bold;font-family:'Liberation Sans', sans-serif;transform:scaleX(0.9389);background:#a8a8a8;box-shadow:-1.5px 0 0 #a8a8a8,1.5px 0 0 #a8a8a8;text-shadow:0.5px 0.5px 0.8px #333,0 0 1px #666;-webkit-text-stroke:0.15px #fff;">00:00:12:244</span>
<span class="t" id="t38" style="left:296.11px;top:396.42px;line-height:6.76px;font-size:5.2px;color:#fff;font-weight:bold;font-family:'Liberation Sans', sans-serif;transform:scaleX(0.9471);background:#a8a8a8;box-shadow:-1.5px 0 0 #a8a8a8,1.5px 0 0 #a8a8a8;text-shadow:0.5px 0.5px 0.8px #333,0 0 1px #666;-webkit-text-stroke:0.15px #fff;">00:00:14:693</span>
<span class="t" id="t39" style="left:347.98px;top:396.42px;line-height:6.76px;font-size:5.2px;color:#fff;font-weight:bold;font-family:'Liberation Sans', sans-serif;transform:scaleX(0.9471);background:#a8a8a8;box-shadow:-1.5px 0 0 #a8a8a8,1.5px 0 0 #a8a8a8;text-shadow:0.5px 0.5px 0.8px #333,0 0 1px #666;-webkit-text-stroke:0.15px #fff;">00:00:17:142</span>
<span class="t" id="t40" style="left:399.88px;top:396.42px;line-height:6.76px;font-size:5.2px;color:#fff;font-weight:bold;font-family:'Liberation Sans', sans-serif;transform:scaleX(0.9389);background:#a8a8a8;box-shadow:-1.5px 0 0 #a8a8a8,1.5px 0 0 #a8a8a8;text-shadow:0.5px 0.5px 0.8px #333,0 0 1px #666;-webkit-text-stroke:0.15px #fff;">00:00:19:591</span>
<span class="t" id="t41" style="left:451.54px;top:396.42px;line-height:6.76px;font-size:5.2px;color:#fff;font-weight:bold;font-family:'Liberation Sans', sans-serif;transform:scaleX(0.9471);background:#a8a8a8;box-shadow:-1.5px 0 0 #a8a8a8,1.5px 0 0 #a8a8a8;text-shadow:0.5px 0.5px 0.8px #333,0 0 1px #666;-webkit-text-stroke:0.15px #fff;">00:00:22:040</span>
<span class="t" id="t42" style="left:503.32px;top:396.42px;line-height:6.76px;font-size:5.2px;color:#fff;font-weight:bold;font-family:'Liberation Sans', sans-serif;transform:scaleX(0.9471);background:#a8a8a8;box-shadow:-1.5px 0 0 #a8a8a8,1.5px 0 0 #a8a8a8;text-shadow:0.5px 0.5px 0.8px #333,0 0 1px #666;-webkit-text-stroke:0.15px #fff;">00:00:24:489</span>
<span class="t" id="t43" style="left:554.23px;top:396.42px;line-height:6.76px;font-size:5.2px;color:#fff;font-weight:bold;font-family:'Liberation Sans', sans-serif;transform:scaleX(0.9389);background:#a8a8a8;box-shadow:-1.5px 0 0 #a8a8a8,1.5px 0 0 #a8a8a8;text-shadow:0.5px 0.5px 0.8px #333,0 0 1px #666;-webkit-text-stroke:0.15px #fff;">00:00:26:938</span>
<!-- watermark overlay -->
<div class="a" style="left:435px;top:359.2px;width:138px;height:11.8px;background:rgba(255,255,255,0.215)"></div>
<div class="a" style="left:435px;top:371px;width:138px;height:23px;background:rgba(120,130,135,0.16)"></div>
<div class="a" style="left:435px;top:394px;width:138px;height:43px;background:rgba(235,235,235,0.14);box-shadow:inset 1px 0 0 rgba(255,255,255,0.10),inset -1px 0 0 rgba(255,255,255,0.10)"></div>
<svg class="a" style="left:435px;top:359px" width="138" height="78" viewBox="435 359 138 78">
<path d="M480 380.2H546" stroke="rgba(90,100,105,0.35)" stroke-width="1.6" stroke-dasharray="3.2 1.6" fill="none"/>
<path d="M480 406.3H570" stroke="rgba(215,215,215,0.35)" stroke-width="1.4" stroke-dasharray="3.2 1.6" fill="none"/>
<path d="M556 377c6 1 9 6 9 12l-5 4c1-6-1-11-6-13z" fill="rgba(90,100,105,0.35)"/>
<path d="M478 384c2-4 7-6 12-5l-2 4c-4 0-6 2-8 5z" fill="rgba(90,100,105,0.3)"/>
<path d="M446 437c1-8 5-13 11-15l4-7c-2-3-1-7 3-8c4-1 7 1 8 5c3 1 6 3 8 7l4 9c2 3 2 6 1 9z" fill="rgba(90,90,90,0.28)"/>
<path d="M462 408c-5-3-12-1-13 5c-1 5 3 9 8 9" stroke="rgba(200,200,200,0.3)" stroke-width="1.2" fill="none"/>
</svg>
<span class="t" id="t44" style="left:439.67px;top:357.83px;line-height:23.4px;font-size:18px;color:rgba(0,0,0,0.74);font-weight:bold;font-family:'Liberation Serif', serif;transform:scaleX(0.6420);-webkit-text-stroke:0.5px rgba(0,0,0,0.74);">TESTED ★100% CLEAN</span>
<span class="t" id="t45" style="left:488.37px;top:383.45px;line-height:15.6px;font-size:12px;color:rgba(95,105,110,0.42);font-weight:bold;font-family:'Liberation Serif', serif;transform:scaleX(0.8680);-webkit-text-stroke:0.3px rgba(95,105,110,0.42);">CERTIFIED</span>
<span class="t" id="t46" style="left:483.16px;top:407.93px;line-height:23.4px;font-size:18px;color:rgba(222,222,222,0.5);font-weight:bold;font-family:'Liberation Serif', serif;transform:scaleX(0.6808);-webkit-text-stroke:0.5px rgba(222,222,222,0.5);">MAJORGEEKS</span>
<span class="t" id="t47" style="left:490.82px;top:426.02px;line-height:9.1px;font-size:7px;color:rgba(222,222,222,0.55);font-weight:bold;font-family:'Liberation Sans', sans-serif;transform:scaleX(1.2347);">★★★★★★</span>
<span class="t" id="t48" style="left:554.00px;top:424.60px;line-height:10.79px;font-size:8.3px;color:rgba(222,222,222,0.55);font-weight:bold;font-family:'Liberation Serif', serif;transform:scaleX(0.7183);-webkit-text-stroke:0.3px rgba(222,222,222,0.5);">.COM</span>
</div></body></html>
